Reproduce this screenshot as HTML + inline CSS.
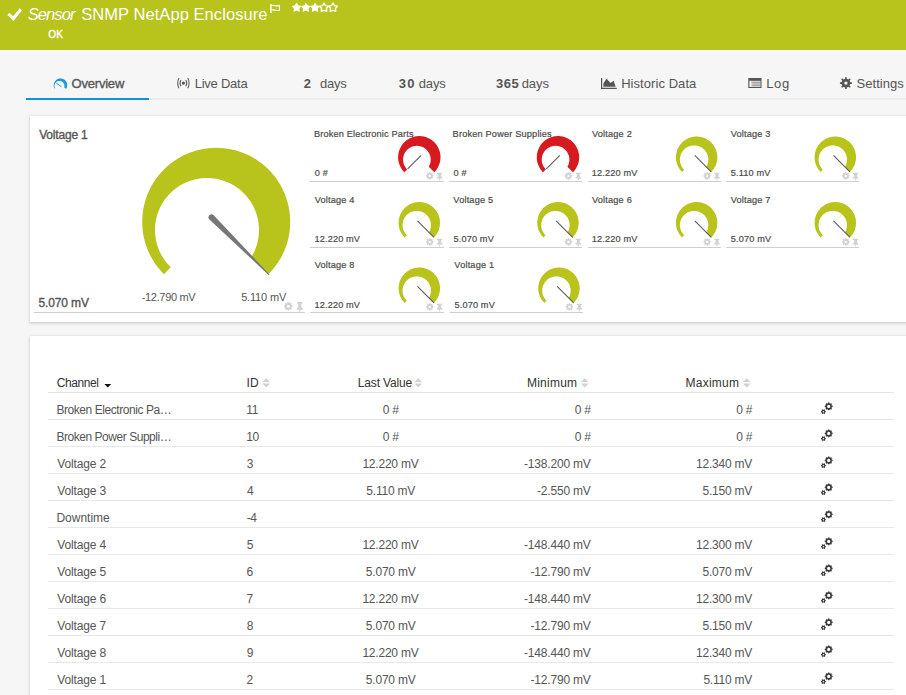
<!DOCTYPE html><html><head><meta charset="utf-8"><style>
html,body{margin:0;padding:0;width:906px;height:695px;overflow:hidden;background:#f6f6f6;font-family:"Liberation Sans",sans-serif;}
.t{position:absolute;white-space:nowrap;}
.abs{position:absolute;}
svg{position:absolute;left:0;top:0;}
</style></head><body>
<div class="abs" style="left:0;top:0;width:906px;height:50px;background:#b8c31c"></div>
<div class="t" style="left:27.64px;top:6px;font-size:16.5px;line-height:16.5px;font-weight:normal;font-style:italic;color:#fff;letter-spacing:-0.895px;">Sensor</div>
<div class="t" style="left:81.15px;top:6px;font-size:16.5px;line-height:16.5px;font-weight:normal;font-style:normal;color:#fff;letter-spacing:0.067px;">SNMP NetApp Enclosure</div>
<div class="t" style="left:48.32px;top:30px;font-size:10px;line-height:10px;font-weight:normal;font-style:normal;color:#fff;letter-spacing:0.137px;-webkit-text-stroke:0.35px #fff;">OK</div>
<div class="abs" style="left:26px;top:98px;width:880px;height:2px;background:#ebebeb"></div>
<div class="abs" style="left:26px;top:98px;width:123px;height:2px;background:#0a96d4"></div>
<div class="t" style="left:71.58px;top:77px;font-size:13px;line-height:13px;font-weight:normal;font-style:normal;color:#555;letter-spacing:-0.213px;-webkit-text-stroke:0.35px #555;">Overview</div>
<div class="t" style="left:194.74px;top:77px;font-size:13px;line-height:13px;font-weight:normal;font-style:normal;color:#555;letter-spacing:-0.245px;">Live Data</div>
<div class="t" style="left:303.75px;top:77px;font-size:13px;line-height:13px;font-weight:bold;font-style:normal;color:#555;letter-spacing:0.000px;">2</div>
<div class="t" style="left:320.06px;top:77px;font-size:13px;line-height:13px;font-weight:normal;font-style:normal;color:#555;letter-spacing:-0.216px;">days</div>
<div class="t" style="left:398.70px;top:77px;font-size:13px;line-height:13px;font-weight:bold;font-style:normal;color:#555;letter-spacing:1.374px;">30</div>
<div class="t" style="left:418.76px;top:77px;font-size:13px;line-height:13px;font-weight:normal;font-style:normal;color:#555;letter-spacing:-0.116px;">days</div>
<div class="t" style="left:495.90px;top:77px;font-size:13px;line-height:13px;font-weight:bold;font-style:normal;color:#555;letter-spacing:0.636px;">365</div>
<div class="t" style="left:521.66px;top:77px;font-size:13px;line-height:13px;font-weight:normal;font-style:normal;color:#555;letter-spacing:-0.016px;">days</div>
<div class="t" style="left:621.14px;top:77px;font-size:13px;line-height:13px;font-weight:normal;font-style:normal;color:#555;letter-spacing:0.063px;">Historic Data</div>
<div class="t" style="left:766.14px;top:77px;font-size:13px;line-height:13px;font-weight:normal;font-style:normal;color:#555;letter-spacing:0.754px;">Log</div>
<div class="t" style="left:856.61px;top:77px;font-size:13px;line-height:13px;font-weight:normal;font-style:normal;color:#555;letter-spacing:0.028px;">Settings</div>
<div class="abs" style="left:30px;top:116px;width:900px;height:206px;background:#fff;box-shadow:0 1px 3px rgba(0,0,0,0.2),0 0 2px rgba(0,0,0,0.06)"></div>
<div class="abs" style="left:30px;top:336px;width:900px;height:400px;background:#fff;box-shadow:0 1px 3px rgba(0,0,0,0.2),0 0 2px rgba(0,0,0,0.06)"></div>
<div class="abs" style="left:34px;top:312px;width:271px;height:1px;background:#cfcfcf"></div>
<div class="abs" style="left:310px;top:181px;width:134px;height:1px;background:#cfcfcf"></div>
<div class="t" style="left:313.95px;top:130px;font-size:9.2px;line-height:9.2px;font-weight:normal;font-style:normal;color:#4a4a4a;letter-spacing:0.164px;-webkit-text-stroke:0.2px #4a4a4a;">Broken Electronic Parts</div>
<div class="t" style="left:314.84px;top:169px;font-size:9.2px;line-height:9.2px;font-weight:normal;font-style:normal;color:#4a4a4a;letter-spacing:0.148px;-webkit-text-stroke:0.2px #4a4a4a;">0 #</div>
<div class="abs" style="left:449px;top:181px;width:133px;height:1px;background:#cfcfcf"></div>
<div class="t" style="left:452.62px;top:130px;font-size:9.2px;line-height:9.2px;font-weight:normal;font-style:normal;color:#4a4a4a;letter-spacing:0.180px;-webkit-text-stroke:0.2px #4a4a4a;">Broken Power Supplies</div>
<div class="t" style="left:453.51px;top:169px;font-size:9.2px;line-height:9.2px;font-weight:normal;font-style:normal;color:#4a4a4a;letter-spacing:0.148px;-webkit-text-stroke:0.2px #4a4a4a;">0 #</div>
<div class="abs" style="left:588px;top:181px;width:133px;height:1px;background:#cfcfcf"></div>
<div class="t" style="left:592.00px;top:130px;font-size:9.2px;line-height:9.2px;font-weight:normal;font-style:normal;color:#4a4a4a;letter-spacing:0.180px;-webkit-text-stroke:0.2px #4a4a4a;">Voltage 2</div>
<div class="t" style="left:591.84px;top:169px;font-size:9.2px;line-height:9.2px;font-weight:normal;font-style:normal;color:#4a4a4a;letter-spacing:0.131px;-webkit-text-stroke:0.2px #4a4a4a;">12.220 mV</div>
<div class="abs" style="left:726px;top:181px;width:133px;height:1px;background:#cfcfcf"></div>
<div class="t" style="left:730.67px;top:130px;font-size:9.2px;line-height:9.2px;font-weight:normal;font-style:normal;color:#4a4a4a;letter-spacing:0.180px;-webkit-text-stroke:0.2px #4a4a4a;">Voltage 3</div>
<div class="t" style="left:730.84px;top:169px;font-size:9.2px;line-height:9.2px;font-weight:normal;font-style:normal;color:#4a4a4a;letter-spacing:0.131px;-webkit-text-stroke:0.2px #4a4a4a;">5.110 mV</div>
<div class="abs" style="left:310px;top:247px;width:134px;height:1px;background:#cfcfcf"></div>
<div class="t" style="left:314.66px;top:196px;font-size:9.2px;line-height:9.2px;font-weight:normal;font-style:normal;color:#4a4a4a;letter-spacing:0.181px;-webkit-text-stroke:0.2px #4a4a4a;">Voltage 4</div>
<div class="t" style="left:314.50px;top:235px;font-size:9.2px;line-height:9.2px;font-weight:normal;font-style:normal;color:#4a4a4a;letter-spacing:0.131px;-webkit-text-stroke:0.2px #4a4a4a;">12.220 mV</div>
<div class="abs" style="left:449px;top:247px;width:133px;height:1px;background:#cfcfcf"></div>
<div class="t" style="left:453.33px;top:196px;font-size:9.2px;line-height:9.2px;font-weight:normal;font-style:normal;color:#4a4a4a;letter-spacing:0.180px;-webkit-text-stroke:0.2px #4a4a4a;">Voltage 5</div>
<div class="t" style="left:453.50px;top:235px;font-size:9.2px;line-height:9.2px;font-weight:normal;font-style:normal;color:#4a4a4a;letter-spacing:0.133px;-webkit-text-stroke:0.2px #4a4a4a;">5.070 mV</div>
<div class="abs" style="left:588px;top:247px;width:133px;height:1px;background:#cfcfcf"></div>
<div class="t" style="left:592.00px;top:196px;font-size:9.2px;line-height:9.2px;font-weight:normal;font-style:normal;color:#4a4a4a;letter-spacing:0.180px;-webkit-text-stroke:0.2px #4a4a4a;">Voltage 6</div>
<div class="t" style="left:591.84px;top:235px;font-size:9.2px;line-height:9.2px;font-weight:normal;font-style:normal;color:#4a4a4a;letter-spacing:0.131px;-webkit-text-stroke:0.2px #4a4a4a;">12.220 mV</div>
<div class="abs" style="left:726px;top:247px;width:133px;height:1px;background:#cfcfcf"></div>
<div class="t" style="left:730.67px;top:196px;font-size:9.2px;line-height:9.2px;font-weight:normal;font-style:normal;color:#4a4a4a;letter-spacing:0.180px;-webkit-text-stroke:0.2px #4a4a4a;">Voltage 7</div>
<div class="t" style="left:730.84px;top:235px;font-size:9.2px;line-height:9.2px;font-weight:normal;font-style:normal;color:#4a4a4a;letter-spacing:0.133px;-webkit-text-stroke:0.2px #4a4a4a;">5.070 mV</div>
<div class="abs" style="left:310px;top:312px;width:134px;height:1px;background:#cfcfcf"></div>
<div class="t" style="left:314.66px;top:261px;font-size:9.2px;line-height:9.2px;font-weight:normal;font-style:normal;color:#4a4a4a;letter-spacing:0.180px;-webkit-text-stroke:0.2px #4a4a4a;">Voltage 8</div>
<div class="t" style="left:314.50px;top:301px;font-size:9.2px;line-height:9.2px;font-weight:normal;font-style:normal;color:#4a4a4a;letter-spacing:0.131px;-webkit-text-stroke:0.2px #4a4a4a;">12.220 mV</div>
<div class="abs" style="left:450px;top:312px;width:133px;height:1px;background:#cfcfcf"></div>
<div class="t" style="left:454.33px;top:261px;font-size:9.2px;line-height:9.2px;font-weight:normal;font-style:normal;color:#4a4a4a;letter-spacing:0.180px;-webkit-text-stroke:0.2px #4a4a4a;">Voltage 1</div>
<div class="t" style="left:454.50px;top:301px;font-size:9.2px;line-height:9.2px;font-weight:normal;font-style:normal;color:#4a4a4a;letter-spacing:0.133px;-webkit-text-stroke:0.2px #4a4a4a;">5.070 mV</div>
<div class="t" style="left:39.15px;top:129px;font-size:12px;line-height:12px;font-weight:normal;font-style:normal;color:#555;letter-spacing:-0.176px;-webkit-text-stroke:0.35px #555;">Voltage 1</div>
<div class="t" style="left:38.52px;top:297px;font-size:12px;line-height:12px;font-weight:normal;font-style:normal;color:#555;letter-spacing:-0.133px;-webkit-text-stroke:0.35px #555;">5.070 mV</div>
<div class="t" style="left:141.71px;top:292px;font-size:11px;line-height:11px;font-weight:normal;font-style:normal;color:#555;letter-spacing:-0.325px;">-12.790 mV</div>
<div class="t" style="left:241.16px;top:292px;font-size:11px;line-height:11px;font-weight:normal;font-style:normal;color:#555;letter-spacing:-0.169px;">5.110 mV</div>
<div class="abs" style="left:48px;top:392px;width:846px;height:1px;background:#e4e4e4"></div>
<div class="t" style="left:56.79px;top:377px;font-size:12px;line-height:12px;font-weight:normal;font-style:normal;color:#333;letter-spacing:-0.416px;">Channel</div>
<div class="t" style="left:246.59px;top:377px;font-size:12px;line-height:12px;font-weight:normal;font-style:normal;color:#333;letter-spacing:0.000px;">ID</div>
<div class="t" style="left:357.72px;top:377px;font-size:12px;line-height:12px;font-weight:normal;font-style:normal;color:#333;letter-spacing:-0.144px;">Last Value</div>
<div class="t" style="left:526.92px;top:377px;font-size:12px;line-height:12px;font-weight:normal;font-style:normal;color:#333;letter-spacing:0.252px;">Minimum</div>
<div class="t" style="left:685.62px;top:377px;font-size:12px;line-height:12px;font-weight:normal;font-style:normal;color:#333;letter-spacing:0.229px;">Maximum</div>
<div class="abs" style="left:48px;top:419px;width:846px;height:1px;background:#e8e8e8"></div>
<div class="t" style="left:56.42px;top:404px;font-size:12px;line-height:12px;font-weight:normal;font-style:normal;color:#555;letter-spacing:-0.437px;">Broken Electronic Pa…</div>
<div class="t" style="left:246.28px;top:404px;font-size:12px;line-height:12px;font-weight:normal;font-style:normal;color:#555;letter-spacing:-0.329px;">11</div>
<div class="t" style="left:382.70px;top:404px;font-size:12px;line-height:12px;font-weight:normal;font-style:normal;color:#555;letter-spacing:-0.242px;">0 #</div>
<div class="t" style="left:574.63px;top:404px;font-size:12px;line-height:12px;font-weight:normal;font-style:normal;color:#555;letter-spacing:-0.226px;">0 #</div>
<div class="t" style="left:736.16px;top:404px;font-size:12px;line-height:12px;font-weight:normal;font-style:normal;color:#555;letter-spacing:-0.242px;">0 #</div>
<div class="abs" style="left:48px;top:446px;width:846px;height:1px;background:#e8e8e8"></div>
<div class="t" style="left:56.42px;top:431px;font-size:12px;line-height:12px;font-weight:normal;font-style:normal;color:#555;letter-spacing:-0.460px;">Broken Power Suppli…</div>
<div class="t" style="left:246.28px;top:431px;font-size:12px;line-height:12px;font-weight:normal;font-style:normal;color:#555;letter-spacing:-0.359px;">10</div>
<div class="t" style="left:382.70px;top:431px;font-size:12px;line-height:12px;font-weight:normal;font-style:normal;color:#555;letter-spacing:-0.242px;">0 #</div>
<div class="t" style="left:574.63px;top:431px;font-size:12px;line-height:12px;font-weight:normal;font-style:normal;color:#555;letter-spacing:-0.226px;">0 #</div>
<div class="t" style="left:736.16px;top:431px;font-size:12px;line-height:12px;font-weight:normal;font-style:normal;color:#555;letter-spacing:-0.242px;">0 #</div>
<div class="abs" style="left:48px;top:473px;width:846px;height:1px;background:#e8e8e8"></div>
<div class="t" style="left:57.35px;top:458px;font-size:12px;line-height:12px;font-weight:normal;font-style:normal;color:#555;letter-spacing:-0.154px;">Voltage 2</div>
<div class="t" style="left:246.74px;top:458px;font-size:12px;line-height:12px;font-weight:normal;font-style:normal;color:#555;letter-spacing:0.000px;">3</div>
<div class="t" style="left:362.41px;top:458px;font-size:12px;line-height:12px;font-weight:normal;font-style:normal;color:#555;letter-spacing:-0.214px;">12.220 mV</div>
<div class="t" style="left:524.05px;top:458px;font-size:12px;line-height:12px;font-weight:normal;font-style:normal;color:#555;letter-spacing:-0.191px;">-138.200 mV</div>
<div class="t" style="left:696.03px;top:458px;font-size:12px;line-height:12px;font-weight:normal;font-style:normal;color:#555;letter-spacing:-0.214px;">12.340 mV</div>
<div class="abs" style="left:48px;top:500px;width:846px;height:1px;background:#e8e8e8"></div>
<div class="t" style="left:57.35px;top:485px;font-size:12px;line-height:12px;font-weight:normal;font-style:normal;color:#555;letter-spacing:-0.155px;">Voltage 3</div>
<div class="t" style="left:246.92px;top:485px;font-size:12px;line-height:12px;font-weight:normal;font-style:normal;color:#555;letter-spacing:0.000px;">4</div>
<div class="t" style="left:366.30px;top:485px;font-size:12px;line-height:12px;font-weight:normal;font-style:normal;color:#555;letter-spacing:-0.214px;">5.110 mV</div>
<div class="t" style="left:537.03px;top:485px;font-size:12px;line-height:12px;font-weight:normal;font-style:normal;color:#555;letter-spacing:-0.192px;">-2.550 mV</div>
<div class="t" style="left:702.52px;top:485px;font-size:12px;line-height:12px;font-weight:normal;font-style:normal;color:#555;letter-spacing:-0.218px;">5.150 mV</div>
<div class="abs" style="left:48px;top:527px;width:846px;height:1px;background:#e8e8e8"></div>
<div class="t" style="left:56.42px;top:512px;font-size:12px;line-height:12px;font-weight:normal;font-style:normal;color:#555;letter-spacing:0.000px;">Downtime</div>
<div class="t" style="left:246.67px;top:512px;font-size:12px;line-height:12px;font-weight:normal;font-style:normal;color:#555;letter-spacing:-0.294px;">-4</div>
<div class="abs" style="left:48px;top:554px;width:846px;height:1px;background:#e8e8e8"></div>
<div class="t" style="left:57.35px;top:539px;font-size:12px;line-height:12px;font-weight:normal;font-style:normal;color:#555;letter-spacing:-0.155px;">Voltage 4</div>
<div class="t" style="left:246.72px;top:539px;font-size:12px;line-height:12px;font-weight:normal;font-style:normal;color:#555;letter-spacing:0.000px;">5</div>
<div class="t" style="left:362.41px;top:539px;font-size:12px;line-height:12px;font-weight:normal;font-style:normal;color:#555;letter-spacing:-0.214px;">12.220 mV</div>
<div class="t" style="left:524.05px;top:539px;font-size:12px;line-height:12px;font-weight:normal;font-style:normal;color:#555;letter-spacing:-0.191px;">-148.440 mV</div>
<div class="t" style="left:696.03px;top:539px;font-size:12px;line-height:12px;font-weight:normal;font-style:normal;color:#555;letter-spacing:-0.214px;">12.300 mV</div>
<div class="abs" style="left:48px;top:581px;width:846px;height:1px;background:#e8e8e8"></div>
<div class="t" style="left:57.35px;top:566px;font-size:12px;line-height:12px;font-weight:normal;font-style:normal;color:#555;letter-spacing:-0.155px;">Voltage 5</div>
<div class="t" style="left:246.59px;top:566px;font-size:12px;line-height:12px;font-weight:normal;font-style:normal;color:#555;letter-spacing:0.000px;">6</div>
<div class="t" style="left:365.87px;top:566px;font-size:12px;line-height:12px;font-weight:normal;font-style:normal;color:#555;letter-spacing:-0.218px;">5.070 mV</div>
<div class="t" style="left:530.54px;top:566px;font-size:12px;line-height:12px;font-weight:normal;font-style:normal;color:#555;letter-spacing:-0.191px;">-12.790 mV</div>
<div class="t" style="left:702.52px;top:566px;font-size:12px;line-height:12px;font-weight:normal;font-style:normal;color:#555;letter-spacing:-0.218px;">5.070 mV</div>
<div class="abs" style="left:48px;top:608px;width:846px;height:1px;background:#e8e8e8"></div>
<div class="t" style="left:57.35px;top:593px;font-size:12px;line-height:12px;font-weight:normal;font-style:normal;color:#555;letter-spacing:-0.155px;">Voltage 6</div>
<div class="t" style="left:246.58px;top:593px;font-size:12px;line-height:12px;font-weight:normal;font-style:normal;color:#555;letter-spacing:0.000px;">7</div>
<div class="t" style="left:362.41px;top:593px;font-size:12px;line-height:12px;font-weight:normal;font-style:normal;color:#555;letter-spacing:-0.214px;">12.220 mV</div>
<div class="t" style="left:524.05px;top:593px;font-size:12px;line-height:12px;font-weight:normal;font-style:normal;color:#555;letter-spacing:-0.191px;">-148.440 mV</div>
<div class="t" style="left:696.03px;top:593px;font-size:12px;line-height:12px;font-weight:normal;font-style:normal;color:#555;letter-spacing:-0.214px;">12.300 mV</div>
<div class="abs" style="left:48px;top:635px;width:846px;height:1px;background:#e8e8e8"></div>
<div class="t" style="left:57.35px;top:620px;font-size:12px;line-height:12px;font-weight:normal;font-style:normal;color:#555;letter-spacing:-0.154px;">Voltage 7</div>
<div class="t" style="left:246.68px;top:620px;font-size:12px;line-height:12px;font-weight:normal;font-style:normal;color:#555;letter-spacing:0.000px;">8</div>
<div class="t" style="left:365.87px;top:620px;font-size:12px;line-height:12px;font-weight:normal;font-style:normal;color:#555;letter-spacing:-0.218px;">5.070 mV</div>
<div class="t" style="left:530.54px;top:620px;font-size:12px;line-height:12px;font-weight:normal;font-style:normal;color:#555;letter-spacing:-0.191px;">-12.790 mV</div>
<div class="t" style="left:702.52px;top:620px;font-size:12px;line-height:12px;font-weight:normal;font-style:normal;color:#555;letter-spacing:-0.218px;">5.150 mV</div>
<div class="abs" style="left:48px;top:662px;width:846px;height:1px;background:#e8e8e8"></div>
<div class="t" style="left:57.35px;top:647px;font-size:12px;line-height:12px;font-weight:normal;font-style:normal;color:#555;letter-spacing:-0.155px;">Voltage 8</div>
<div class="t" style="left:246.64px;top:647px;font-size:12px;line-height:12px;font-weight:normal;font-style:normal;color:#555;letter-spacing:0.000px;">9</div>
<div class="t" style="left:362.41px;top:647px;font-size:12px;line-height:12px;font-weight:normal;font-style:normal;color:#555;letter-spacing:-0.214px;">12.220 mV</div>
<div class="t" style="left:524.05px;top:647px;font-size:12px;line-height:12px;font-weight:normal;font-style:normal;color:#555;letter-spacing:-0.191px;">-148.440 mV</div>
<div class="t" style="left:696.03px;top:647px;font-size:12px;line-height:12px;font-weight:normal;font-style:normal;color:#555;letter-spacing:-0.214px;">12.340 mV</div>
<div class="abs" style="left:48px;top:689px;width:846px;height:1px;background:#e8e8e8"></div>
<div class="t" style="left:57.35px;top:674px;font-size:12px;line-height:12px;font-weight:normal;font-style:normal;color:#555;letter-spacing:-0.154px;">Voltage 1</div>
<div class="t" style="left:246.60px;top:674px;font-size:12px;line-height:12px;font-weight:normal;font-style:normal;color:#555;letter-spacing:0.000px;">2</div>
<div class="t" style="left:365.87px;top:674px;font-size:12px;line-height:12px;font-weight:normal;font-style:normal;color:#555;letter-spacing:-0.218px;">5.070 mV</div>
<div class="t" style="left:530.54px;top:674px;font-size:12px;line-height:12px;font-weight:normal;font-style:normal;color:#555;letter-spacing:-0.191px;">-12.790 mV</div>
<div class="t" style="left:703.38px;top:674px;font-size:12px;line-height:12px;font-weight:normal;font-style:normal;color:#555;letter-spacing:-0.214px;">5.110 mV</div>
<svg width="906" height="695" style="z-index:3"><path d="M163.87,274.13 L161.21,271.32 L158.69,268.37 L156.33,265.30 L154.14,262.10 L152.11,258.80 L150.27,255.40 L148.60,251.90 L147.12,248.32 L145.82,244.67 L144.72,240.95 L143.82,237.19 L143.11,233.38 L142.61,229.54 L142.30,225.67 L142.20,221.80 L142.30,217.93 L142.61,214.06 L143.11,210.22 L143.82,206.41 L144.72,202.65 L145.82,198.93 L147.12,195.28 L148.60,191.70 L150.27,188.20 L152.11,184.80 L154.14,181.50 L156.33,178.30 L158.69,175.23 L161.21,172.28 L163.87,169.47 L166.68,166.81 L169.63,164.29 L172.70,161.93 L175.90,159.74 L179.20,157.71 L182.60,155.87 L186.10,154.20 L189.68,152.72 L193.33,151.42 L197.05,150.32 L200.81,149.42 L204.62,148.71 L208.46,148.21 L212.33,147.90 L216.20,147.80 L220.07,147.90 L223.94,148.21 L227.78,148.71 L231.59,149.42 L235.35,150.32 L239.07,151.42 L242.72,152.72 L246.30,154.20 L249.80,155.87 L253.20,157.71 L256.50,159.74 L259.70,161.93 L262.77,164.29 L265.72,166.81 L268.53,169.47 L271.19,172.28 L273.71,175.23 L276.07,178.30 L278.26,181.50 L280.29,184.80 L282.13,188.20 L283.80,191.70 L285.28,195.28 L286.58,198.93 L287.68,202.65 L288.58,206.41 L289.29,210.22 L289.79,214.06 L290.10,217.93 L290.20,221.80 L290.10,225.67 L289.79,229.54 L289.29,233.38 L288.58,237.19 L287.68,240.95 L286.58,244.67 L285.28,248.32 L283.80,251.90 L282.13,255.40 L280.29,258.80 L278.26,262.10 L276.07,265.30 L273.71,268.37 L271.19,271.32 L268.53,274.13 L251.43,257.03 L252.75,254.71 L253.94,252.37 L255.00,249.99 L255.93,247.60 L256.73,245.20 L257.40,242.79 L257.95,240.39 L258.38,237.99 L258.70,235.61 L258.90,233.24 L258.99,230.90 L258.98,228.58 L258.87,226.28 L258.66,224.03 L258.35,221.80 L257.95,219.61 L257.47,217.46 L256.89,215.35 L256.24,213.29 L255.51,211.27 L254.70,209.29 L253.81,207.36 L252.86,205.48 L251.83,203.65 L250.73,201.86 L249.57,200.13 L248.34,198.45 L247.04,196.82 L245.69,195.25 L244.27,193.73 L242.79,192.27 L241.25,190.87 L239.65,189.53 L237.99,188.24 L236.28,187.03 L234.51,185.87 L232.68,184.78 L230.80,183.77 L228.87,182.82 L226.88,181.95 L224.84,181.16 L222.75,180.44 L220.61,179.81 L218.43,179.27 L216.20,178.82 L213.93,178.46 L211.62,178.21 L209.27,178.05 L206.89,178.00 L204.48,178.06 L202.05,178.24 L199.59,178.53 L197.12,178.95 L194.64,179.49 L192.16,180.16 L189.68,180.97 L187.22,181.91 L184.77,182.99 L182.35,184.21 L179.97,185.57 L177.64,187.08 L175.36,188.73 L173.15,190.52 L171.02,192.46 L168.97,194.53 L167.02,196.74 L165.19,199.09 L163.47,201.56 L161.88,204.15 L160.43,206.86 L159.14,209.67 L158.00,212.58 L157.04,215.58 L156.25,218.66 L155.65,221.80 L155.24,224.99 L155.03,228.23 L155.02,231.49 L155.22,234.76 L155.62,238.03 L156.24,241.28 L157.06,244.50 L158.09,247.67 L159.33,250.78 L160.77,253.80 L162.40,256.74 L164.22,259.56 L166.22,262.27 L168.40,264.84 L170.73,267.27 Z" fill="#b8c31c"/><path d="M209.48,219.53 L268.85,275.15 L269.55,274.45 L213.72,215.27 A3.0,3.0 0 0 0 209.48,219.53 Z" fill="#777"/><path d="M291.55,305.30 L292.51,305.45 L292.51,307.15 L291.55,307.30 L291.48,307.50 L291.40,307.70 L291.31,307.89 L291.88,308.68 L290.68,309.88 L289.89,309.31 L289.70,309.40 L289.50,309.48 L289.30,309.55 L289.15,310.51 L287.45,310.51 L287.30,309.55 L287.10,309.48 L286.90,309.40 L286.71,309.31 L285.92,309.88 L284.72,308.68 L285.29,307.89 L285.20,307.70 L285.12,307.50 L285.05,307.30 L284.09,307.15 L284.09,305.45 L285.05,305.30 L285.12,305.10 L285.20,304.90 L285.29,304.71 L284.72,303.92 L285.92,302.72 L286.71,303.29 L286.90,303.20 L287.10,303.12 L287.30,303.05 L287.45,302.09 L289.15,302.09 L289.30,303.05 L289.50,303.12 L289.70,303.20 L289.89,303.29 L290.68,302.72 L291.88,303.92 L291.31,304.71 L291.40,304.90 L291.48,305.10 Z" fill="#d2d2d2"/><circle cx="288.30" cy="306.30" r="1.4" fill="#fff"/><path transform="translate(296.60,302.10) scale(1.03,1.3)" d="M0.3,0 h5.3 v1.3 h-1 v2.4 l1.4,1 v1.1 h-2.4 v1.9 h-1 v-1.9 h-2.4 v-1.1 l1.4,-1 v-2.4 h-1 z" fill="#d2d2d2"/><path d="M404.31,172.24 L403.55,171.44 L402.82,170.59 L402.15,169.71 L401.52,168.80 L400.94,167.85 L400.41,166.87 L399.93,165.87 L399.51,164.85 L399.14,163.80 L398.82,162.74 L398.56,161.66 L398.36,160.57 L398.22,159.47 L398.13,158.36 L398.10,157.25 L398.13,156.14 L398.22,155.03 L398.36,153.93 L398.56,152.84 L398.82,151.76 L399.14,150.70 L399.51,149.65 L399.93,148.63 L400.41,147.63 L400.94,146.65 L401.52,145.70 L402.15,144.79 L402.82,143.91 L403.55,143.06 L404.31,142.26 L405.11,141.50 L405.96,140.77 L406.84,140.10 L407.75,139.47 L408.70,138.89 L409.68,138.36 L410.68,137.88 L411.70,137.46 L412.75,137.09 L413.81,136.77 L414.89,136.51 L415.98,136.31 L417.08,136.17 L418.19,136.08 L419.30,136.05 L420.41,136.08 L421.52,136.17 L422.62,136.31 L423.71,136.51 L424.79,136.77 L425.85,137.09 L426.90,137.46 L427.92,137.88 L428.92,138.36 L429.90,138.89 L430.85,139.47 L431.76,140.10 L432.64,140.77 L433.49,141.50 L434.29,142.26 L435.05,143.06 L435.78,143.91 L436.45,144.79 L437.08,145.70 L437.66,146.65 L438.19,147.63 L438.67,148.63 L439.09,149.65 L439.46,150.70 L439.78,151.76 L440.04,152.84 L440.24,153.93 L440.38,155.03 L440.47,156.14 L440.50,157.25 L440.47,158.36 L440.38,159.47 L440.24,160.57 L440.04,161.66 L439.78,162.74 L439.46,163.80 L439.09,164.85 L438.67,165.87 L438.19,166.87 L437.66,167.85 L437.08,168.80 L436.45,169.71 L435.78,170.59 L435.05,171.44 L434.29,172.24 L428.76,166.71 L429.11,166.08 L429.42,165.45 L429.70,164.81 L429.94,164.16 L430.15,163.51 L430.32,162.87 L430.46,162.22 L430.57,161.57 L430.64,160.93 L430.68,160.30 L430.70,159.67 L430.69,159.05 L430.65,158.44 L430.58,157.84 L430.49,157.25 L430.37,156.67 L430.24,156.10 L430.07,155.54 L429.89,155.00 L429.69,154.47 L429.47,153.95 L429.22,153.44 L428.96,152.95 L428.68,152.47 L428.39,152.00 L428.07,151.55 L427.74,151.12 L427.40,150.69 L427.04,150.28 L426.66,149.89 L426.27,149.51 L425.86,149.15 L425.43,148.81 L425.00,148.48 L424.55,148.16 L424.08,147.87 L423.60,147.59 L423.11,147.33 L422.60,147.08 L422.08,146.86 L421.55,146.66 L421.01,146.48 L420.45,146.31 L419.88,146.18 L419.30,146.06 L418.71,145.97 L418.11,145.90 L417.50,145.86 L416.88,145.85 L416.25,145.87 L415.62,145.91 L414.98,145.98 L414.33,146.09 L413.68,146.23 L413.04,146.40 L412.39,146.61 L411.74,146.85 L411.10,147.13 L410.47,147.44 L409.84,147.79 L409.23,148.18 L408.63,148.61 L408.04,149.07 L407.47,149.57 L406.93,150.11 L406.41,150.68 L405.92,151.29 L405.46,151.94 L405.03,152.61 L404.64,153.32 L404.28,154.06 L403.97,154.82 L403.70,155.61 L403.48,156.42 L403.31,157.25 L403.19,158.09 L403.12,158.95 L403.10,159.82 L403.14,160.69 L403.23,161.56 L403.38,162.42 L403.59,163.28 L403.85,164.13 L404.16,164.96 L404.53,165.78 L404.96,166.56 L405.43,167.33 L405.96,168.06 L406.53,168.75 L407.14,169.41 Z" fill="#d71920"/><line x1="421.14" y1="155.41" x2="407.63" y2="168.92" stroke="#5a5a5a" stroke-width="1.05"/><path d="M432.59,175.10 L433.55,175.26 L433.55,176.54 L432.59,176.70 L432.52,176.91 L432.44,177.11 L432.34,177.30 L432.90,178.09 L431.99,179.00 L431.20,178.44 L431.01,178.54 L430.81,178.62 L430.60,178.69 L430.44,179.65 L429.16,179.65 L429.00,178.69 L428.79,178.62 L428.59,178.54 L428.40,178.44 L427.61,179.00 L426.70,178.09 L427.26,177.30 L427.16,177.11 L427.08,176.91 L427.01,176.70 L426.05,176.54 L426.05,175.26 L427.01,175.10 L427.08,174.89 L427.16,174.69 L427.26,174.50 L426.70,173.71 L427.61,172.80 L428.40,173.36 L428.59,173.26 L428.79,173.18 L429.00,173.11 L429.16,172.15 L430.44,172.15 L430.60,173.11 L430.81,173.18 L431.01,173.26 L431.20,173.36 L431.99,172.80 L432.90,173.71 L432.34,174.50 L432.44,174.69 L432.52,174.89 Z" fill="#d2d2d2"/><circle cx="429.80" cy="175.90" r="1.2" fill="#fff"/><path transform="translate(436.50,172.80) scale(1.0)" d="M0.3,0 h5.3 v1.3 h-1 v2.4 l1.4,1 v1.1 h-2.4 v1.9 h-1 v-1.9 h-2.4 v-1.1 l1.4,-1 v-2.4 h-1 z" fill="#d2d2d2"/><path d="M542.98,172.24 L542.22,171.44 L541.49,170.59 L540.82,169.71 L540.19,168.80 L539.61,167.85 L539.08,166.87 L538.60,165.87 L538.18,164.85 L537.81,163.80 L537.49,162.74 L537.23,161.66 L537.03,160.57 L536.89,159.47 L536.80,158.36 L536.77,157.25 L536.80,156.14 L536.89,155.03 L537.03,153.93 L537.23,152.84 L537.49,151.76 L537.81,150.70 L538.18,149.65 L538.60,148.63 L539.08,147.63 L539.61,146.65 L540.19,145.70 L540.82,144.79 L541.49,143.91 L542.22,143.06 L542.98,142.26 L543.78,141.50 L544.63,140.77 L545.51,140.10 L546.42,139.47 L547.37,138.89 L548.35,138.36 L549.35,137.88 L550.37,137.46 L551.42,137.09 L552.48,136.77 L553.56,136.51 L554.65,136.31 L555.75,136.17 L556.86,136.08 L557.97,136.05 L559.08,136.08 L560.19,136.17 L561.29,136.31 L562.38,136.51 L563.46,136.77 L564.52,137.09 L565.57,137.46 L566.59,137.88 L567.59,138.36 L568.57,138.89 L569.52,139.47 L570.43,140.10 L571.31,140.77 L572.16,141.50 L572.96,142.26 L573.72,143.06 L574.45,143.91 L575.12,144.79 L575.75,145.70 L576.33,146.65 L576.86,147.63 L577.34,148.63 L577.76,149.65 L578.13,150.70 L578.45,151.76 L578.71,152.84 L578.91,153.93 L579.05,155.03 L579.14,156.14 L579.17,157.25 L579.14,158.36 L579.05,159.47 L578.91,160.57 L578.71,161.66 L578.45,162.74 L578.13,163.80 L577.76,164.85 L577.34,165.87 L576.86,166.87 L576.33,167.85 L575.75,168.80 L575.12,169.71 L574.45,170.59 L573.72,171.44 L572.96,172.24 L567.43,166.71 L567.78,166.08 L568.09,165.45 L568.37,164.81 L568.61,164.16 L568.82,163.51 L568.99,162.87 L569.13,162.22 L569.24,161.57 L569.31,160.93 L569.35,160.30 L569.37,159.67 L569.36,159.05 L569.32,158.44 L569.25,157.84 L569.16,157.25 L569.04,156.67 L568.91,156.10 L568.74,155.54 L568.56,155.00 L568.36,154.47 L568.14,153.95 L567.89,153.44 L567.63,152.95 L567.35,152.47 L567.06,152.00 L566.74,151.55 L566.41,151.12 L566.07,150.69 L565.71,150.28 L565.33,149.89 L564.94,149.51 L564.53,149.15 L564.10,148.81 L563.67,148.48 L563.22,148.16 L562.75,147.87 L562.27,147.59 L561.78,147.33 L561.27,147.08 L560.75,146.86 L560.22,146.66 L559.68,146.48 L559.12,146.31 L558.55,146.18 L557.97,146.06 L557.38,145.97 L556.78,145.90 L556.17,145.86 L555.55,145.85 L554.92,145.87 L554.29,145.91 L553.65,145.98 L553.00,146.09 L552.35,146.23 L551.71,146.40 L551.06,146.61 L550.41,146.85 L549.77,147.13 L549.14,147.44 L548.51,147.79 L547.90,148.18 L547.30,148.61 L546.71,149.07 L546.14,149.57 L545.60,150.11 L545.08,150.68 L544.59,151.29 L544.13,151.94 L543.70,152.61 L543.31,153.32 L542.95,154.06 L542.64,154.82 L542.37,155.61 L542.15,156.42 L541.98,157.25 L541.86,158.09 L541.79,158.95 L541.77,159.82 L541.81,160.69 L541.90,161.56 L542.05,162.42 L542.26,163.28 L542.52,164.13 L542.83,164.96 L543.20,165.78 L543.63,166.56 L544.10,167.33 L544.63,168.06 L545.20,168.75 L545.81,169.41 Z" fill="#d71920"/><line x1="559.81" y1="155.41" x2="546.30" y2="168.92" stroke="#5a5a5a" stroke-width="1.05"/><path d="M571.26,175.10 L572.22,175.26 L572.22,176.54 L571.26,176.70 L571.19,176.91 L571.11,177.11 L571.01,177.30 L571.57,178.09 L570.66,179.00 L569.87,178.44 L569.68,178.54 L569.48,178.62 L569.27,178.69 L569.11,179.65 L567.83,179.65 L567.67,178.69 L567.46,178.62 L567.26,178.54 L567.07,178.44 L566.28,179.00 L565.37,178.09 L565.93,177.30 L565.83,177.11 L565.75,176.91 L565.68,176.70 L564.72,176.54 L564.72,175.26 L565.68,175.10 L565.75,174.89 L565.83,174.69 L565.93,174.50 L565.37,173.71 L566.28,172.80 L567.07,173.36 L567.26,173.26 L567.46,173.18 L567.67,173.11 L567.83,172.15 L569.11,172.15 L569.27,173.11 L569.48,173.18 L569.68,173.26 L569.87,173.36 L570.66,172.80 L571.57,173.71 L571.01,174.50 L571.11,174.69 L571.19,174.89 Z" fill="#d2d2d2"/><circle cx="568.47" cy="175.90" r="1.2" fill="#fff"/><path transform="translate(575.17,172.80) scale(1.0)" d="M0.3,0 h5.3 v1.3 h-1 v2.4 l1.4,1 v1.1 h-2.4 v1.9 h-1 v-1.9 h-2.4 v-1.1 l1.4,-1 v-2.4 h-1 z" fill="#d2d2d2"/><path d="M682.00,171.89 L681.26,171.10 L680.55,170.28 L679.89,169.42 L679.28,168.52 L678.71,167.60 L678.20,166.65 L677.73,165.67 L677.31,164.67 L676.95,163.65 L676.65,162.61 L676.39,161.55 L676.19,160.49 L676.05,159.41 L675.97,158.33 L675.94,157.25 L675.97,156.17 L676.05,155.09 L676.19,154.01 L676.39,152.95 L676.65,151.89 L676.95,150.85 L677.31,149.83 L677.73,148.83 L678.20,147.85 L678.71,146.90 L679.28,145.98 L679.89,145.08 L680.55,144.22 L681.26,143.40 L682.00,142.61 L682.79,141.87 L683.61,141.16 L684.47,140.50 L685.37,139.89 L686.29,139.32 L687.24,138.81 L688.22,138.34 L689.22,137.92 L690.24,137.56 L691.28,137.26 L692.34,137.00 L693.40,136.80 L694.48,136.66 L695.56,136.58 L696.64,136.55 L697.72,136.58 L698.80,136.66 L699.88,136.80 L700.94,137.00 L702.00,137.26 L703.04,137.56 L704.06,137.92 L705.06,138.34 L706.04,138.81 L706.99,139.32 L707.91,139.89 L708.81,140.50 L709.67,141.16 L710.49,141.87 L711.28,142.61 L712.02,143.40 L712.73,144.22 L713.39,145.08 L714.00,145.98 L714.57,146.90 L715.08,147.85 L715.55,148.83 L715.97,149.83 L716.33,150.85 L716.63,151.89 L716.89,152.95 L717.09,154.01 L717.23,155.09 L717.31,156.17 L717.34,157.25 L717.31,158.33 L717.23,159.41 L717.09,160.49 L716.89,161.55 L716.63,162.61 L716.33,163.65 L715.97,164.67 L715.55,165.67 L715.08,166.65 L714.57,167.60 L714.00,168.52 L713.39,169.42 L712.73,170.28 L712.02,171.10 L711.28,171.89 L706.28,166.89 L706.64,166.25 L706.96,165.61 L707.24,164.95 L707.49,164.30 L707.70,163.64 L707.88,162.98 L708.03,162.32 L708.14,161.66 L708.22,161.01 L708.27,160.37 L708.29,159.73 L708.28,159.09 L708.24,158.47 L708.18,157.85 L708.09,157.25 L707.98,156.66 L707.84,156.07 L707.69,155.50 L707.50,154.94 L707.30,154.39 L707.08,153.86 L706.83,153.34 L706.57,152.83 L706.29,152.33 L705.99,151.85 L705.67,151.38 L705.34,150.93 L704.98,150.49 L704.62,150.07 L704.23,149.66 L703.83,149.27 L703.41,148.89 L702.98,148.53 L702.53,148.18 L702.07,147.85 L701.59,147.54 L701.09,147.25 L700.59,146.97 L700.06,146.72 L699.53,146.48 L698.97,146.27 L698.41,146.07 L697.83,145.90 L697.24,145.75 L696.64,145.63 L696.03,145.53 L695.40,145.46 L694.77,145.42 L694.12,145.40 L693.47,145.41 L692.81,145.46 L692.14,145.53 L691.47,145.64 L690.80,145.79 L690.12,145.96 L689.45,146.18 L688.78,146.43 L688.11,146.72 L687.45,147.05 L686.80,147.41 L686.16,147.82 L685.54,148.26 L684.93,148.75 L684.35,149.27 L683.79,149.83 L683.25,150.43 L682.74,151.06 L682.27,151.73 L681.83,152.44 L681.43,153.17 L681.07,153.94 L680.75,154.73 L680.48,155.55 L680.26,156.39 L680.09,157.25 L679.97,158.12 L679.90,159.01 L679.89,159.90 L679.94,160.80 L680.05,161.70 L680.21,162.59 L680.43,163.47 L680.71,164.34 L681.04,165.20 L681.43,166.03 L681.87,166.84 L682.37,167.62 L682.92,168.36 L683.51,169.07 L684.15,169.74 Z" fill="#b8c31c"/><line x1="694.80" y1="155.41" x2="711.28" y2="171.89" stroke="#5a5a5a" stroke-width="1.05"/><path d="M709.93,175.10 L710.89,175.26 L710.89,176.54 L709.93,176.70 L709.86,176.91 L709.78,177.11 L709.68,177.30 L710.24,178.09 L709.33,179.00 L708.54,178.44 L708.35,178.54 L708.15,178.62 L707.94,178.69 L707.78,179.65 L706.50,179.65 L706.34,178.69 L706.13,178.62 L705.93,178.54 L705.74,178.44 L704.95,179.00 L704.04,178.09 L704.60,177.30 L704.50,177.11 L704.42,176.91 L704.35,176.70 L703.39,176.54 L703.39,175.26 L704.35,175.10 L704.42,174.89 L704.50,174.69 L704.60,174.50 L704.04,173.71 L704.95,172.80 L705.74,173.36 L705.93,173.26 L706.13,173.18 L706.34,173.11 L706.50,172.15 L707.78,172.15 L707.94,173.11 L708.15,173.18 L708.35,173.26 L708.54,173.36 L709.33,172.80 L710.24,173.71 L709.68,174.50 L709.78,174.69 L709.86,174.89 Z" fill="#d2d2d2"/><circle cx="707.14" cy="175.90" r="1.2" fill="#fff"/><path transform="translate(713.84,172.80) scale(1.0)" d="M0.3,0 h5.3 v1.3 h-1 v2.4 l1.4,1 v1.1 h-2.4 v1.9 h-1 v-1.9 h-2.4 v-1.1 l1.4,-1 v-2.4 h-1 z" fill="#d2d2d2"/><path d="M820.67,171.89 L819.93,171.10 L819.22,170.28 L818.56,169.42 L817.95,168.52 L817.38,167.60 L816.87,166.65 L816.40,165.67 L815.98,164.67 L815.62,163.65 L815.32,162.61 L815.06,161.55 L814.86,160.49 L814.72,159.41 L814.64,158.33 L814.61,157.25 L814.64,156.17 L814.72,155.09 L814.86,154.01 L815.06,152.95 L815.32,151.89 L815.62,150.85 L815.98,149.83 L816.40,148.83 L816.87,147.85 L817.38,146.90 L817.95,145.98 L818.56,145.08 L819.22,144.22 L819.93,143.40 L820.67,142.61 L821.46,141.87 L822.28,141.16 L823.14,140.50 L824.04,139.89 L824.96,139.32 L825.91,138.81 L826.89,138.34 L827.89,137.92 L828.91,137.56 L829.95,137.26 L831.01,137.00 L832.07,136.80 L833.15,136.66 L834.23,136.58 L835.31,136.55 L836.39,136.58 L837.47,136.66 L838.55,136.80 L839.61,137.00 L840.67,137.26 L841.71,137.56 L842.73,137.92 L843.73,138.34 L844.71,138.81 L845.66,139.32 L846.58,139.89 L847.48,140.50 L848.34,141.16 L849.16,141.87 L849.95,142.61 L850.69,143.40 L851.40,144.22 L852.06,145.08 L852.67,145.98 L853.24,146.90 L853.75,147.85 L854.22,148.83 L854.64,149.83 L855.00,150.85 L855.30,151.89 L855.56,152.95 L855.76,154.01 L855.90,155.09 L855.98,156.17 L856.01,157.25 L855.98,158.33 L855.90,159.41 L855.76,160.49 L855.56,161.55 L855.30,162.61 L855.00,163.65 L854.64,164.67 L854.22,165.67 L853.75,166.65 L853.24,167.60 L852.67,168.52 L852.06,169.42 L851.40,170.28 L850.69,171.10 L849.95,171.89 L844.95,166.89 L845.31,166.25 L845.63,165.61 L845.91,164.95 L846.16,164.30 L846.37,163.64 L846.55,162.98 L846.70,162.32 L846.81,161.66 L846.89,161.01 L846.94,160.37 L846.96,159.73 L846.95,159.09 L846.91,158.47 L846.85,157.85 L846.76,157.25 L846.65,156.66 L846.51,156.07 L846.36,155.50 L846.17,154.94 L845.97,154.39 L845.75,153.86 L845.50,153.34 L845.24,152.83 L844.96,152.33 L844.66,151.85 L844.34,151.38 L844.01,150.93 L843.65,150.49 L843.29,150.07 L842.90,149.66 L842.50,149.27 L842.08,148.89 L841.65,148.53 L841.20,148.18 L840.74,147.85 L840.26,147.54 L839.76,147.25 L839.26,146.97 L838.73,146.72 L838.20,146.48 L837.64,146.27 L837.08,146.07 L836.50,145.90 L835.91,145.75 L835.31,145.63 L834.70,145.53 L834.07,145.46 L833.44,145.42 L832.79,145.40 L832.14,145.41 L831.48,145.46 L830.81,145.53 L830.14,145.64 L829.47,145.79 L828.79,145.96 L828.12,146.18 L827.45,146.43 L826.78,146.72 L826.12,147.05 L825.47,147.41 L824.83,147.82 L824.21,148.26 L823.60,148.75 L823.02,149.27 L822.46,149.83 L821.92,150.43 L821.41,151.06 L820.94,151.73 L820.50,152.44 L820.10,153.17 L819.74,153.94 L819.42,154.73 L819.15,155.55 L818.93,156.39 L818.76,157.25 L818.64,158.12 L818.57,159.01 L818.56,159.90 L818.61,160.80 L818.72,161.70 L818.88,162.59 L819.10,163.47 L819.38,164.34 L819.71,165.20 L820.10,166.03 L820.54,166.84 L821.04,167.62 L821.59,168.36 L822.18,169.07 L822.82,169.74 Z" fill="#b8c31c"/><line x1="833.47" y1="155.41" x2="849.95" y2="171.89" stroke="#5a5a5a" stroke-width="1.05"/><path d="M848.60,175.10 L849.56,175.26 L849.56,176.54 L848.60,176.70 L848.53,176.91 L848.45,177.11 L848.35,177.30 L848.91,178.09 L848.00,179.00 L847.21,178.44 L847.02,178.54 L846.82,178.62 L846.61,178.69 L846.45,179.65 L845.17,179.65 L845.01,178.69 L844.80,178.62 L844.60,178.54 L844.41,178.44 L843.62,179.00 L842.71,178.09 L843.27,177.30 L843.17,177.11 L843.09,176.91 L843.02,176.70 L842.06,176.54 L842.06,175.26 L843.02,175.10 L843.09,174.89 L843.17,174.69 L843.27,174.50 L842.71,173.71 L843.62,172.80 L844.41,173.36 L844.60,173.26 L844.80,173.18 L845.01,173.11 L845.17,172.15 L846.45,172.15 L846.61,173.11 L846.82,173.18 L847.02,173.26 L847.21,173.36 L848.00,172.80 L848.91,173.71 L848.35,174.50 L848.45,174.69 L848.53,174.89 Z" fill="#d2d2d2"/><circle cx="845.81" cy="175.90" r="1.2" fill="#fff"/><path transform="translate(852.51,172.80) scale(1.0)" d="M0.3,0 h5.3 v1.3 h-1 v2.4 l1.4,1 v1.1 h-2.4 v1.9 h-1 v-1.9 h-2.4 v-1.1 l1.4,-1 v-2.4 h-1 z" fill="#d2d2d2"/><path d="M404.66,237.39 L403.92,236.60 L403.21,235.78 L402.55,234.92 L401.94,234.02 L401.37,233.10 L400.86,232.15 L400.39,231.17 L399.97,230.17 L399.61,229.15 L399.31,228.11 L399.05,227.05 L398.85,225.99 L398.71,224.91 L398.63,223.83 L398.60,222.75 L398.63,221.67 L398.71,220.59 L398.85,219.51 L399.05,218.45 L399.31,217.39 L399.61,216.35 L399.97,215.33 L400.39,214.33 L400.86,213.35 L401.37,212.40 L401.94,211.48 L402.55,210.58 L403.21,209.72 L403.92,208.90 L404.66,208.11 L405.45,207.37 L406.27,206.66 L407.13,206.00 L408.03,205.39 L408.95,204.82 L409.90,204.31 L410.88,203.84 L411.88,203.42 L412.90,203.06 L413.94,202.76 L415.00,202.50 L416.06,202.30 L417.14,202.16 L418.22,202.08 L419.30,202.05 L420.38,202.08 L421.46,202.16 L422.54,202.30 L423.60,202.50 L424.66,202.76 L425.70,203.06 L426.72,203.42 L427.72,203.84 L428.70,204.31 L429.65,204.82 L430.57,205.39 L431.47,206.00 L432.33,206.66 L433.15,207.37 L433.94,208.11 L434.68,208.90 L435.39,209.72 L436.05,210.58 L436.66,211.48 L437.23,212.40 L437.74,213.35 L438.21,214.33 L438.63,215.33 L438.99,216.35 L439.29,217.39 L439.55,218.45 L439.75,219.51 L439.89,220.59 L439.97,221.67 L440.00,222.75 L439.97,223.83 L439.89,224.91 L439.75,225.99 L439.55,227.05 L439.29,228.11 L438.99,229.15 L438.63,230.17 L438.21,231.17 L437.74,232.15 L437.23,233.10 L436.66,234.02 L436.05,234.92 L435.39,235.78 L434.68,236.60 L433.94,237.39 L428.94,232.39 L429.30,231.75 L429.62,231.11 L429.90,230.45 L430.15,229.80 L430.36,229.14 L430.54,228.48 L430.69,227.82 L430.80,227.16 L430.88,226.51 L430.93,225.87 L430.95,225.23 L430.94,224.59 L430.90,223.97 L430.84,223.35 L430.75,222.75 L430.64,222.16 L430.50,221.57 L430.35,221.00 L430.16,220.44 L429.96,219.89 L429.74,219.36 L429.49,218.84 L429.23,218.33 L428.95,217.83 L428.65,217.35 L428.33,216.88 L428.00,216.43 L427.64,215.99 L427.28,215.57 L426.89,215.16 L426.49,214.77 L426.07,214.39 L425.64,214.03 L425.19,213.68 L424.73,213.35 L424.25,213.04 L423.75,212.75 L423.25,212.47 L422.72,212.22 L422.19,211.98 L421.63,211.77 L421.07,211.57 L420.49,211.40 L419.90,211.25 L419.30,211.13 L418.69,211.03 L418.06,210.96 L417.43,210.92 L416.78,210.90 L416.13,210.91 L415.47,210.96 L414.80,211.03 L414.13,211.14 L413.46,211.29 L412.78,211.46 L412.11,211.68 L411.44,211.93 L410.77,212.22 L410.11,212.55 L409.46,212.91 L408.82,213.32 L408.20,213.76 L407.59,214.25 L407.01,214.77 L406.45,215.33 L405.91,215.93 L405.40,216.56 L404.93,217.23 L404.49,217.94 L404.09,218.67 L403.73,219.44 L403.41,220.23 L403.14,221.05 L402.92,221.89 L402.75,222.75 L402.63,223.62 L402.56,224.51 L402.55,225.40 L402.60,226.30 L402.71,227.20 L402.87,228.09 L403.09,228.97 L403.37,229.84 L403.70,230.70 L404.09,231.53 L404.53,232.34 L405.03,233.12 L405.58,233.86 L406.17,234.57 L406.81,235.24 Z" fill="#b8c31c"/><line x1="417.46" y1="220.91" x2="433.94" y2="237.39" stroke="#5a5a5a" stroke-width="1.05"/><path d="M432.59,241.10 L433.55,241.26 L433.55,242.54 L432.59,242.70 L432.52,242.91 L432.44,243.11 L432.34,243.30 L432.90,244.09 L431.99,245.00 L431.20,244.44 L431.01,244.54 L430.81,244.62 L430.60,244.69 L430.44,245.65 L429.16,245.65 L429.00,244.69 L428.79,244.62 L428.59,244.54 L428.40,244.44 L427.61,245.00 L426.70,244.09 L427.26,243.30 L427.16,243.11 L427.08,242.91 L427.01,242.70 L426.05,242.54 L426.05,241.26 L427.01,241.10 L427.08,240.89 L427.16,240.69 L427.26,240.50 L426.70,239.71 L427.61,238.80 L428.40,239.36 L428.59,239.26 L428.79,239.18 L429.00,239.11 L429.16,238.15 L430.44,238.15 L430.60,239.11 L430.81,239.18 L431.01,239.26 L431.20,239.36 L431.99,238.80 L432.90,239.71 L432.34,240.50 L432.44,240.69 L432.52,240.89 Z" fill="#d2d2d2"/><circle cx="429.80" cy="241.90" r="1.2" fill="#fff"/><path transform="translate(436.50,238.80) scale(1.0)" d="M0.3,0 h5.3 v1.3 h-1 v2.4 l1.4,1 v1.1 h-2.4 v1.9 h-1 v-1.9 h-2.4 v-1.1 l1.4,-1 v-2.4 h-1 z" fill="#d2d2d2"/><path d="M543.33,237.39 L542.59,236.60 L541.88,235.78 L541.22,234.92 L540.61,234.02 L540.04,233.10 L539.53,232.15 L539.06,231.17 L538.64,230.17 L538.28,229.15 L537.98,228.11 L537.72,227.05 L537.52,225.99 L537.38,224.91 L537.30,223.83 L537.27,222.75 L537.30,221.67 L537.38,220.59 L537.52,219.51 L537.72,218.45 L537.98,217.39 L538.28,216.35 L538.64,215.33 L539.06,214.33 L539.53,213.35 L540.04,212.40 L540.61,211.48 L541.22,210.58 L541.88,209.72 L542.59,208.90 L543.33,208.11 L544.12,207.37 L544.94,206.66 L545.80,206.00 L546.70,205.39 L547.62,204.82 L548.57,204.31 L549.55,203.84 L550.55,203.42 L551.57,203.06 L552.61,202.76 L553.67,202.50 L554.73,202.30 L555.81,202.16 L556.89,202.08 L557.97,202.05 L559.05,202.08 L560.13,202.16 L561.21,202.30 L562.27,202.50 L563.33,202.76 L564.37,203.06 L565.39,203.42 L566.39,203.84 L567.37,204.31 L568.32,204.82 L569.24,205.39 L570.14,206.00 L571.00,206.66 L571.82,207.37 L572.61,208.11 L573.35,208.90 L574.06,209.72 L574.72,210.58 L575.33,211.48 L575.90,212.40 L576.41,213.35 L576.88,214.33 L577.30,215.33 L577.66,216.35 L577.96,217.39 L578.22,218.45 L578.42,219.51 L578.56,220.59 L578.64,221.67 L578.67,222.75 L578.64,223.83 L578.56,224.91 L578.42,225.99 L578.22,227.05 L577.96,228.11 L577.66,229.15 L577.30,230.17 L576.88,231.17 L576.41,232.15 L575.90,233.10 L575.33,234.02 L574.72,234.92 L574.06,235.78 L573.35,236.60 L572.61,237.39 L567.61,232.39 L567.97,231.75 L568.29,231.11 L568.57,230.45 L568.82,229.80 L569.03,229.14 L569.21,228.48 L569.36,227.82 L569.47,227.16 L569.55,226.51 L569.60,225.87 L569.62,225.23 L569.61,224.59 L569.57,223.97 L569.51,223.35 L569.42,222.75 L569.31,222.16 L569.17,221.57 L569.02,221.00 L568.83,220.44 L568.63,219.89 L568.41,219.36 L568.16,218.84 L567.90,218.33 L567.62,217.83 L567.32,217.35 L567.00,216.88 L566.67,216.43 L566.31,215.99 L565.95,215.57 L565.56,215.16 L565.16,214.77 L564.74,214.39 L564.31,214.03 L563.86,213.68 L563.40,213.35 L562.92,213.04 L562.42,212.75 L561.92,212.47 L561.39,212.22 L560.86,211.98 L560.30,211.77 L559.74,211.57 L559.16,211.40 L558.57,211.25 L557.97,211.13 L557.36,211.03 L556.73,210.96 L556.10,210.92 L555.45,210.90 L554.80,210.91 L554.14,210.96 L553.47,211.03 L552.80,211.14 L552.13,211.29 L551.45,211.46 L550.78,211.68 L550.11,211.93 L549.44,212.22 L548.78,212.55 L548.13,212.91 L547.49,213.32 L546.87,213.76 L546.26,214.25 L545.68,214.77 L545.12,215.33 L544.58,215.93 L544.07,216.56 L543.60,217.23 L543.16,217.94 L542.76,218.67 L542.40,219.44 L542.08,220.23 L541.81,221.05 L541.59,221.89 L541.42,222.75 L541.30,223.62 L541.23,224.51 L541.22,225.40 L541.27,226.30 L541.38,227.20 L541.54,228.09 L541.76,228.97 L542.04,229.84 L542.37,230.70 L542.76,231.53 L543.20,232.34 L543.70,233.12 L544.25,233.86 L544.84,234.57 L545.48,235.24 Z" fill="#b8c31c"/><line x1="556.13" y1="220.91" x2="572.61" y2="237.39" stroke="#5a5a5a" stroke-width="1.05"/><path d="M571.26,241.10 L572.22,241.26 L572.22,242.54 L571.26,242.70 L571.19,242.91 L571.11,243.11 L571.01,243.30 L571.57,244.09 L570.66,245.00 L569.87,244.44 L569.68,244.54 L569.48,244.62 L569.27,244.69 L569.11,245.65 L567.83,245.65 L567.67,244.69 L567.46,244.62 L567.26,244.54 L567.07,244.44 L566.28,245.00 L565.37,244.09 L565.93,243.30 L565.83,243.11 L565.75,242.91 L565.68,242.70 L564.72,242.54 L564.72,241.26 L565.68,241.10 L565.75,240.89 L565.83,240.69 L565.93,240.50 L565.37,239.71 L566.28,238.80 L567.07,239.36 L567.26,239.26 L567.46,239.18 L567.67,239.11 L567.83,238.15 L569.11,238.15 L569.27,239.11 L569.48,239.18 L569.68,239.26 L569.87,239.36 L570.66,238.80 L571.57,239.71 L571.01,240.50 L571.11,240.69 L571.19,240.89 Z" fill="#d2d2d2"/><circle cx="568.47" cy="241.90" r="1.2" fill="#fff"/><path transform="translate(575.17,238.80) scale(1.0)" d="M0.3,0 h5.3 v1.3 h-1 v2.4 l1.4,1 v1.1 h-2.4 v1.9 h-1 v-1.9 h-2.4 v-1.1 l1.4,-1 v-2.4 h-1 z" fill="#d2d2d2"/><path d="M682.00,237.39 L681.26,236.60 L680.55,235.78 L679.89,234.92 L679.28,234.02 L678.71,233.10 L678.20,232.15 L677.73,231.17 L677.31,230.17 L676.95,229.15 L676.65,228.11 L676.39,227.05 L676.19,225.99 L676.05,224.91 L675.97,223.83 L675.94,222.75 L675.97,221.67 L676.05,220.59 L676.19,219.51 L676.39,218.45 L676.65,217.39 L676.95,216.35 L677.31,215.33 L677.73,214.33 L678.20,213.35 L678.71,212.40 L679.28,211.48 L679.89,210.58 L680.55,209.72 L681.26,208.90 L682.00,208.11 L682.79,207.37 L683.61,206.66 L684.47,206.00 L685.37,205.39 L686.29,204.82 L687.24,204.31 L688.22,203.84 L689.22,203.42 L690.24,203.06 L691.28,202.76 L692.34,202.50 L693.40,202.30 L694.48,202.16 L695.56,202.08 L696.64,202.05 L697.72,202.08 L698.80,202.16 L699.88,202.30 L700.94,202.50 L702.00,202.76 L703.04,203.06 L704.06,203.42 L705.06,203.84 L706.04,204.31 L706.99,204.82 L707.91,205.39 L708.81,206.00 L709.67,206.66 L710.49,207.37 L711.28,208.11 L712.02,208.90 L712.73,209.72 L713.39,210.58 L714.00,211.48 L714.57,212.40 L715.08,213.35 L715.55,214.33 L715.97,215.33 L716.33,216.35 L716.63,217.39 L716.89,218.45 L717.09,219.51 L717.23,220.59 L717.31,221.67 L717.34,222.75 L717.31,223.83 L717.23,224.91 L717.09,225.99 L716.89,227.05 L716.63,228.11 L716.33,229.15 L715.97,230.17 L715.55,231.17 L715.08,232.15 L714.57,233.10 L714.00,234.02 L713.39,234.92 L712.73,235.78 L712.02,236.60 L711.28,237.39 L706.28,232.39 L706.64,231.75 L706.96,231.11 L707.24,230.45 L707.49,229.80 L707.70,229.14 L707.88,228.48 L708.03,227.82 L708.14,227.16 L708.22,226.51 L708.27,225.87 L708.29,225.23 L708.28,224.59 L708.24,223.97 L708.18,223.35 L708.09,222.75 L707.98,222.16 L707.84,221.57 L707.69,221.00 L707.50,220.44 L707.30,219.89 L707.08,219.36 L706.83,218.84 L706.57,218.33 L706.29,217.83 L705.99,217.35 L705.67,216.88 L705.34,216.43 L704.98,215.99 L704.62,215.57 L704.23,215.16 L703.83,214.77 L703.41,214.39 L702.98,214.03 L702.53,213.68 L702.07,213.35 L701.59,213.04 L701.09,212.75 L700.59,212.47 L700.06,212.22 L699.53,211.98 L698.97,211.77 L698.41,211.57 L697.83,211.40 L697.24,211.25 L696.64,211.13 L696.03,211.03 L695.40,210.96 L694.77,210.92 L694.12,210.90 L693.47,210.91 L692.81,210.96 L692.14,211.03 L691.47,211.14 L690.80,211.29 L690.12,211.46 L689.45,211.68 L688.78,211.93 L688.11,212.22 L687.45,212.55 L686.80,212.91 L686.16,213.32 L685.54,213.76 L684.93,214.25 L684.35,214.77 L683.79,215.33 L683.25,215.93 L682.74,216.56 L682.27,217.23 L681.83,217.94 L681.43,218.67 L681.07,219.44 L680.75,220.23 L680.48,221.05 L680.26,221.89 L680.09,222.75 L679.97,223.62 L679.90,224.51 L679.89,225.40 L679.94,226.30 L680.05,227.20 L680.21,228.09 L680.43,228.97 L680.71,229.84 L681.04,230.70 L681.43,231.53 L681.87,232.34 L682.37,233.12 L682.92,233.86 L683.51,234.57 L684.15,235.24 Z" fill="#b8c31c"/><line x1="694.80" y1="220.91" x2="711.28" y2="237.39" stroke="#5a5a5a" stroke-width="1.05"/><path d="M709.93,241.10 L710.89,241.26 L710.89,242.54 L709.93,242.70 L709.86,242.91 L709.78,243.11 L709.68,243.30 L710.24,244.09 L709.33,245.00 L708.54,244.44 L708.35,244.54 L708.15,244.62 L707.94,244.69 L707.78,245.65 L706.50,245.65 L706.34,244.69 L706.13,244.62 L705.93,244.54 L705.74,244.44 L704.95,245.00 L704.04,244.09 L704.60,243.30 L704.50,243.11 L704.42,242.91 L704.35,242.70 L703.39,242.54 L703.39,241.26 L704.35,241.10 L704.42,240.89 L704.50,240.69 L704.60,240.50 L704.04,239.71 L704.95,238.80 L705.74,239.36 L705.93,239.26 L706.13,239.18 L706.34,239.11 L706.50,238.15 L707.78,238.15 L707.94,239.11 L708.15,239.18 L708.35,239.26 L708.54,239.36 L709.33,238.80 L710.24,239.71 L709.68,240.50 L709.78,240.69 L709.86,240.89 Z" fill="#d2d2d2"/><circle cx="707.14" cy="241.90" r="1.2" fill="#fff"/><path transform="translate(713.84,238.80) scale(1.0)" d="M0.3,0 h5.3 v1.3 h-1 v2.4 l1.4,1 v1.1 h-2.4 v1.9 h-1 v-1.9 h-2.4 v-1.1 l1.4,-1 v-2.4 h-1 z" fill="#d2d2d2"/><path d="M820.67,237.39 L819.93,236.60 L819.22,235.78 L818.56,234.92 L817.95,234.02 L817.38,233.10 L816.87,232.15 L816.40,231.17 L815.98,230.17 L815.62,229.15 L815.32,228.11 L815.06,227.05 L814.86,225.99 L814.72,224.91 L814.64,223.83 L814.61,222.75 L814.64,221.67 L814.72,220.59 L814.86,219.51 L815.06,218.45 L815.32,217.39 L815.62,216.35 L815.98,215.33 L816.40,214.33 L816.87,213.35 L817.38,212.40 L817.95,211.48 L818.56,210.58 L819.22,209.72 L819.93,208.90 L820.67,208.11 L821.46,207.37 L822.28,206.66 L823.14,206.00 L824.04,205.39 L824.96,204.82 L825.91,204.31 L826.89,203.84 L827.89,203.42 L828.91,203.06 L829.95,202.76 L831.01,202.50 L832.07,202.30 L833.15,202.16 L834.23,202.08 L835.31,202.05 L836.39,202.08 L837.47,202.16 L838.55,202.30 L839.61,202.50 L840.67,202.76 L841.71,203.06 L842.73,203.42 L843.73,203.84 L844.71,204.31 L845.66,204.82 L846.58,205.39 L847.48,206.00 L848.34,206.66 L849.16,207.37 L849.95,208.11 L850.69,208.90 L851.40,209.72 L852.06,210.58 L852.67,211.48 L853.24,212.40 L853.75,213.35 L854.22,214.33 L854.64,215.33 L855.00,216.35 L855.30,217.39 L855.56,218.45 L855.76,219.51 L855.90,220.59 L855.98,221.67 L856.01,222.75 L855.98,223.83 L855.90,224.91 L855.76,225.99 L855.56,227.05 L855.30,228.11 L855.00,229.15 L854.64,230.17 L854.22,231.17 L853.75,232.15 L853.24,233.10 L852.67,234.02 L852.06,234.92 L851.40,235.78 L850.69,236.60 L849.95,237.39 L844.95,232.39 L845.31,231.75 L845.63,231.11 L845.91,230.45 L846.16,229.80 L846.37,229.14 L846.55,228.48 L846.70,227.82 L846.81,227.16 L846.89,226.51 L846.94,225.87 L846.96,225.23 L846.95,224.59 L846.91,223.97 L846.85,223.35 L846.76,222.75 L846.65,222.16 L846.51,221.57 L846.36,221.00 L846.17,220.44 L845.97,219.89 L845.75,219.36 L845.50,218.84 L845.24,218.33 L844.96,217.83 L844.66,217.35 L844.34,216.88 L844.01,216.43 L843.65,215.99 L843.29,215.57 L842.90,215.16 L842.50,214.77 L842.08,214.39 L841.65,214.03 L841.20,213.68 L840.74,213.35 L840.26,213.04 L839.76,212.75 L839.26,212.47 L838.73,212.22 L838.20,211.98 L837.64,211.77 L837.08,211.57 L836.50,211.40 L835.91,211.25 L835.31,211.13 L834.70,211.03 L834.07,210.96 L833.44,210.92 L832.79,210.90 L832.14,210.91 L831.48,210.96 L830.81,211.03 L830.14,211.14 L829.47,211.29 L828.79,211.46 L828.12,211.68 L827.45,211.93 L826.78,212.22 L826.12,212.55 L825.47,212.91 L824.83,213.32 L824.21,213.76 L823.60,214.25 L823.02,214.77 L822.46,215.33 L821.92,215.93 L821.41,216.56 L820.94,217.23 L820.50,217.94 L820.10,218.67 L819.74,219.44 L819.42,220.23 L819.15,221.05 L818.93,221.89 L818.76,222.75 L818.64,223.62 L818.57,224.51 L818.56,225.40 L818.61,226.30 L818.72,227.20 L818.88,228.09 L819.10,228.97 L819.38,229.84 L819.71,230.70 L820.10,231.53 L820.54,232.34 L821.04,233.12 L821.59,233.86 L822.18,234.57 L822.82,235.24 Z" fill="#b8c31c"/><line x1="833.47" y1="220.91" x2="849.95" y2="237.39" stroke="#5a5a5a" stroke-width="1.05"/><path d="M848.60,241.10 L849.56,241.26 L849.56,242.54 L848.60,242.70 L848.53,242.91 L848.45,243.11 L848.35,243.30 L848.91,244.09 L848.00,245.00 L847.21,244.44 L847.02,244.54 L846.82,244.62 L846.61,244.69 L846.45,245.65 L845.17,245.65 L845.01,244.69 L844.80,244.62 L844.60,244.54 L844.41,244.44 L843.62,245.00 L842.71,244.09 L843.27,243.30 L843.17,243.11 L843.09,242.91 L843.02,242.70 L842.06,242.54 L842.06,241.26 L843.02,241.10 L843.09,240.89 L843.17,240.69 L843.27,240.50 L842.71,239.71 L843.62,238.80 L844.41,239.36 L844.60,239.26 L844.80,239.18 L845.01,239.11 L845.17,238.15 L846.45,238.15 L846.61,239.11 L846.82,239.18 L847.02,239.26 L847.21,239.36 L848.00,238.80 L848.91,239.71 L848.35,240.50 L848.45,240.69 L848.53,240.89 Z" fill="#d2d2d2"/><circle cx="845.81" cy="241.90" r="1.2" fill="#fff"/><path transform="translate(852.51,238.80) scale(1.0)" d="M0.3,0 h5.3 v1.3 h-1 v2.4 l1.4,1 v1.1 h-2.4 v1.9 h-1 v-1.9 h-2.4 v-1.1 l1.4,-1 v-2.4 h-1 z" fill="#d2d2d2"/><path d="M404.66,302.89 L403.92,302.10 L403.21,301.28 L402.55,300.42 L401.94,299.52 L401.37,298.60 L400.86,297.65 L400.39,296.67 L399.97,295.67 L399.61,294.65 L399.31,293.61 L399.05,292.55 L398.85,291.49 L398.71,290.41 L398.63,289.33 L398.60,288.25 L398.63,287.17 L398.71,286.09 L398.85,285.01 L399.05,283.95 L399.31,282.89 L399.61,281.85 L399.97,280.83 L400.39,279.83 L400.86,278.85 L401.37,277.90 L401.94,276.98 L402.55,276.08 L403.21,275.22 L403.92,274.40 L404.66,273.61 L405.45,272.87 L406.27,272.16 L407.13,271.50 L408.03,270.89 L408.95,270.32 L409.90,269.81 L410.88,269.34 L411.88,268.92 L412.90,268.56 L413.94,268.26 L415.00,268.00 L416.06,267.80 L417.14,267.66 L418.22,267.58 L419.30,267.55 L420.38,267.58 L421.46,267.66 L422.54,267.80 L423.60,268.00 L424.66,268.26 L425.70,268.56 L426.72,268.92 L427.72,269.34 L428.70,269.81 L429.65,270.32 L430.57,270.89 L431.47,271.50 L432.33,272.16 L433.15,272.87 L433.94,273.61 L434.68,274.40 L435.39,275.22 L436.05,276.08 L436.66,276.98 L437.23,277.90 L437.74,278.85 L438.21,279.83 L438.63,280.83 L438.99,281.85 L439.29,282.89 L439.55,283.95 L439.75,285.01 L439.89,286.09 L439.97,287.17 L440.00,288.25 L439.97,289.33 L439.89,290.41 L439.75,291.49 L439.55,292.55 L439.29,293.61 L438.99,294.65 L438.63,295.67 L438.21,296.67 L437.74,297.65 L437.23,298.60 L436.66,299.52 L436.05,300.42 L435.39,301.28 L434.68,302.10 L433.94,302.89 L428.94,297.89 L429.30,297.25 L429.62,296.61 L429.90,295.95 L430.15,295.30 L430.36,294.64 L430.54,293.98 L430.69,293.32 L430.80,292.66 L430.88,292.01 L430.93,291.37 L430.95,290.73 L430.94,290.09 L430.90,289.47 L430.84,288.85 L430.75,288.25 L430.64,287.66 L430.50,287.07 L430.35,286.50 L430.16,285.94 L429.96,285.39 L429.74,284.86 L429.49,284.34 L429.23,283.83 L428.95,283.33 L428.65,282.85 L428.33,282.38 L428.00,281.93 L427.64,281.49 L427.28,281.07 L426.89,280.66 L426.49,280.27 L426.07,279.89 L425.64,279.53 L425.19,279.18 L424.73,278.85 L424.25,278.54 L423.75,278.25 L423.25,277.97 L422.72,277.72 L422.19,277.48 L421.63,277.27 L421.07,277.07 L420.49,276.90 L419.90,276.75 L419.30,276.63 L418.69,276.53 L418.06,276.46 L417.43,276.42 L416.78,276.40 L416.13,276.41 L415.47,276.46 L414.80,276.53 L414.13,276.64 L413.46,276.79 L412.78,276.96 L412.11,277.18 L411.44,277.43 L410.77,277.72 L410.11,278.05 L409.46,278.41 L408.82,278.82 L408.20,279.26 L407.59,279.75 L407.01,280.27 L406.45,280.83 L405.91,281.43 L405.40,282.06 L404.93,282.73 L404.49,283.44 L404.09,284.17 L403.73,284.94 L403.41,285.73 L403.14,286.55 L402.92,287.39 L402.75,288.25 L402.63,289.12 L402.56,290.01 L402.55,290.90 L402.60,291.80 L402.71,292.70 L402.87,293.59 L403.09,294.47 L403.37,295.34 L403.70,296.20 L404.09,297.03 L404.53,297.84 L405.03,298.62 L405.58,299.36 L406.17,300.07 L406.81,300.74 Z" fill="#b8c31c"/><line x1="417.46" y1="286.41" x2="433.94" y2="302.89" stroke="#5a5a5a" stroke-width="1.05"/><path d="M432.59,306.10 L433.55,306.26 L433.55,307.54 L432.59,307.70 L432.52,307.91 L432.44,308.11 L432.34,308.30 L432.90,309.09 L431.99,310.00 L431.20,309.44 L431.01,309.54 L430.81,309.62 L430.60,309.69 L430.44,310.65 L429.16,310.65 L429.00,309.69 L428.79,309.62 L428.59,309.54 L428.40,309.44 L427.61,310.00 L426.70,309.09 L427.26,308.30 L427.16,308.11 L427.08,307.91 L427.01,307.70 L426.05,307.54 L426.05,306.26 L427.01,306.10 L427.08,305.89 L427.16,305.69 L427.26,305.50 L426.70,304.71 L427.61,303.80 L428.40,304.36 L428.59,304.26 L428.79,304.18 L429.00,304.11 L429.16,303.15 L430.44,303.15 L430.60,304.11 L430.81,304.18 L431.01,304.26 L431.20,304.36 L431.99,303.80 L432.90,304.71 L432.34,305.50 L432.44,305.69 L432.52,305.89 Z" fill="#d2d2d2"/><circle cx="429.80" cy="306.90" r="1.2" fill="#fff"/><path transform="translate(436.50,303.80) scale(1.0)" d="M0.3,0 h5.3 v1.3 h-1 v2.4 l1.4,1 v1.1 h-2.4 v1.9 h-1 v-1.9 h-2.4 v-1.1 l1.4,-1 v-2.4 h-1 z" fill="#d2d2d2"/><path d="M544.33,302.89 L543.59,302.10 L542.88,301.28 L542.22,300.42 L541.61,299.52 L541.04,298.60 L540.53,297.65 L540.06,296.67 L539.64,295.67 L539.28,294.65 L538.98,293.61 L538.72,292.55 L538.52,291.49 L538.38,290.41 L538.30,289.33 L538.27,288.25 L538.30,287.17 L538.38,286.09 L538.52,285.01 L538.72,283.95 L538.98,282.89 L539.28,281.85 L539.64,280.83 L540.06,279.83 L540.53,278.85 L541.04,277.90 L541.61,276.98 L542.22,276.08 L542.88,275.22 L543.59,274.40 L544.33,273.61 L545.12,272.87 L545.94,272.16 L546.80,271.50 L547.70,270.89 L548.62,270.32 L549.57,269.81 L550.55,269.34 L551.55,268.92 L552.57,268.56 L553.61,268.26 L554.67,268.00 L555.73,267.80 L556.81,267.66 L557.89,267.58 L558.97,267.55 L560.05,267.58 L561.13,267.66 L562.21,267.80 L563.27,268.00 L564.33,268.26 L565.37,268.56 L566.39,268.92 L567.39,269.34 L568.37,269.81 L569.32,270.32 L570.24,270.89 L571.14,271.50 L572.00,272.16 L572.82,272.87 L573.61,273.61 L574.35,274.40 L575.06,275.22 L575.72,276.08 L576.33,276.98 L576.90,277.90 L577.41,278.85 L577.88,279.83 L578.30,280.83 L578.66,281.85 L578.96,282.89 L579.22,283.95 L579.42,285.01 L579.56,286.09 L579.64,287.17 L579.67,288.25 L579.64,289.33 L579.56,290.41 L579.42,291.49 L579.22,292.55 L578.96,293.61 L578.66,294.65 L578.30,295.67 L577.88,296.67 L577.41,297.65 L576.90,298.60 L576.33,299.52 L575.72,300.42 L575.06,301.28 L574.35,302.10 L573.61,302.89 L568.61,297.89 L568.97,297.25 L569.29,296.61 L569.57,295.95 L569.82,295.30 L570.03,294.64 L570.21,293.98 L570.36,293.32 L570.47,292.66 L570.55,292.01 L570.60,291.37 L570.62,290.73 L570.61,290.09 L570.57,289.47 L570.51,288.85 L570.42,288.25 L570.31,287.66 L570.17,287.07 L570.02,286.50 L569.83,285.94 L569.63,285.39 L569.41,284.86 L569.16,284.34 L568.90,283.83 L568.62,283.33 L568.32,282.85 L568.00,282.38 L567.67,281.93 L567.31,281.49 L566.95,281.07 L566.56,280.66 L566.16,280.27 L565.74,279.89 L565.31,279.53 L564.86,279.18 L564.40,278.85 L563.92,278.54 L563.42,278.25 L562.92,277.97 L562.39,277.72 L561.86,277.48 L561.30,277.27 L560.74,277.07 L560.16,276.90 L559.57,276.75 L558.97,276.63 L558.36,276.53 L557.73,276.46 L557.10,276.42 L556.45,276.40 L555.80,276.41 L555.14,276.46 L554.47,276.53 L553.80,276.64 L553.13,276.79 L552.45,276.96 L551.78,277.18 L551.11,277.43 L550.44,277.72 L549.78,278.05 L549.13,278.41 L548.49,278.82 L547.87,279.26 L547.26,279.75 L546.68,280.27 L546.12,280.83 L545.58,281.43 L545.07,282.06 L544.60,282.73 L544.16,283.44 L543.76,284.17 L543.40,284.94 L543.08,285.73 L542.81,286.55 L542.59,287.39 L542.42,288.25 L542.30,289.12 L542.23,290.01 L542.22,290.90 L542.27,291.80 L542.38,292.70 L542.54,293.59 L542.76,294.47 L543.04,295.34 L543.37,296.20 L543.76,297.03 L544.20,297.84 L544.70,298.62 L545.25,299.36 L545.84,300.07 L546.48,300.74 Z" fill="#b8c31c"/><line x1="557.13" y1="286.41" x2="573.61" y2="302.89" stroke="#5a5a5a" stroke-width="1.05"/><path d="M572.26,306.10 L573.22,306.26 L573.22,307.54 L572.26,307.70 L572.19,307.91 L572.11,308.11 L572.01,308.30 L572.57,309.09 L571.66,310.00 L570.87,309.44 L570.68,309.54 L570.48,309.62 L570.27,309.69 L570.11,310.65 L568.83,310.65 L568.67,309.69 L568.46,309.62 L568.26,309.54 L568.07,309.44 L567.28,310.00 L566.37,309.09 L566.93,308.30 L566.83,308.11 L566.75,307.91 L566.68,307.70 L565.72,307.54 L565.72,306.26 L566.68,306.10 L566.75,305.89 L566.83,305.69 L566.93,305.50 L566.37,304.71 L567.28,303.80 L568.07,304.36 L568.26,304.26 L568.46,304.18 L568.67,304.11 L568.83,303.15 L570.11,303.15 L570.27,304.11 L570.48,304.18 L570.68,304.26 L570.87,304.36 L571.66,303.80 L572.57,304.71 L572.01,305.50 L572.11,305.69 L572.19,305.89 Z" fill="#d2d2d2"/><circle cx="569.47" cy="306.90" r="1.2" fill="#fff"/><path transform="translate(576.17,303.80) scale(1.0)" d="M0.3,0 h5.3 v1.3 h-1 v2.4 l1.4,1 v1.1 h-2.4 v1.9 h-1 v-1.9 h-2.4 v-1.1 l1.4,-1 v-2.4 h-1 z" fill="#d2d2d2"/><path d="M104.3,384 h7 l-3.5,3.4 z" fill="#111"/><path d="M262.4,382.1 h7.8 l-3.9,-3.9 z M262.4,383.5 h7.8 l-3.9,3.9 z" fill="#d2d2d2"/><path d="M414.4,382.1 h7.8 l-3.9,-3.9 z M414.4,383.5 h7.8 l-3.9,3.9 z" fill="#d2d2d2"/><path d="M580.8,382.1 h7.8 l-3.9,-3.9 z M580.8,383.5 h7.8 l-3.9,3.9 z" fill="#d2d2d2"/><path d="M742.9,382.1 h7.8 l-3.9,-3.9 z M742.9,383.5 h7.8 l-3.9,3.9 z" fill="#d2d2d2"/><path d="M831.78,405.52 L832.64,405.72 L832.64,407.08 L831.78,407.28 L831.70,407.51 L831.61,407.73 L831.50,407.95 L831.97,408.71 L831.01,409.67 L830.25,409.20 L830.03,409.31 L829.81,409.40 L829.58,409.48 L829.38,410.34 L828.02,410.34 L827.82,409.48 L827.59,409.40 L827.37,409.31 L827.15,409.20 L826.39,409.67 L825.43,408.71 L825.90,407.95 L825.79,407.73 L825.70,407.51 L825.62,407.28 L824.76,407.08 L824.76,405.72 L825.62,405.52 L825.70,405.29 L825.79,405.07 L825.90,404.85 L825.43,404.09 L826.39,403.13 L827.15,403.60 L827.37,403.49 L827.59,403.40 L827.82,403.32 L828.02,402.46 L829.38,402.46 L829.58,403.32 L829.81,403.40 L830.03,403.49 L830.25,403.60 L831.01,403.13 L831.97,404.09 L831.50,404.85 L831.61,405.07 L831.70,405.29 Z" fill="#3a3a3a"/><circle cx="828.70" cy="406.40" r="1.6" fill="#fff"/><path d="M825.18,411.05 L825.84,411.15 L825.84,412.25 L825.18,412.35 L825.10,412.55 L824.99,412.74 L824.86,412.92 L825.09,413.54 L824.15,414.09 L823.73,413.57 L823.51,413.60 L823.29,413.60 L823.07,413.57 L822.65,414.09 L821.71,413.54 L821.94,412.92 L821.81,412.74 L821.70,412.55 L821.62,412.35 L820.96,412.25 L820.96,411.15 L821.62,411.05 L821.70,410.85 L821.81,410.66 L821.94,410.48 L821.71,409.86 L822.65,409.31 L823.07,409.83 L823.29,409.80 L823.51,409.80 L823.73,409.83 L824.15,409.31 L825.09,409.86 L824.86,410.48 L824.99,410.66 L825.10,410.85 Z" fill="#3a3a3a"/><circle cx="823.40" cy="411.70" r="0.75" fill="#fff"/><path d="M831.78,432.52 L832.64,432.72 L832.64,434.08 L831.78,434.28 L831.70,434.51 L831.61,434.73 L831.50,434.95 L831.97,435.71 L831.01,436.67 L830.25,436.20 L830.03,436.31 L829.81,436.40 L829.58,436.48 L829.38,437.34 L828.02,437.34 L827.82,436.48 L827.59,436.40 L827.37,436.31 L827.15,436.20 L826.39,436.67 L825.43,435.71 L825.90,434.95 L825.79,434.73 L825.70,434.51 L825.62,434.28 L824.76,434.08 L824.76,432.72 L825.62,432.52 L825.70,432.29 L825.79,432.07 L825.90,431.85 L825.43,431.09 L826.39,430.13 L827.15,430.60 L827.37,430.49 L827.59,430.40 L827.82,430.32 L828.02,429.46 L829.38,429.46 L829.58,430.32 L829.81,430.40 L830.03,430.49 L830.25,430.60 L831.01,430.13 L831.97,431.09 L831.50,431.85 L831.61,432.07 L831.70,432.29 Z" fill="#3a3a3a"/><circle cx="828.70" cy="433.40" r="1.6" fill="#fff"/><path d="M825.18,438.05 L825.84,438.15 L825.84,439.25 L825.18,439.35 L825.10,439.55 L824.99,439.74 L824.86,439.92 L825.09,440.54 L824.15,441.09 L823.73,440.57 L823.51,440.60 L823.29,440.60 L823.07,440.57 L822.65,441.09 L821.71,440.54 L821.94,439.92 L821.81,439.74 L821.70,439.55 L821.62,439.35 L820.96,439.25 L820.96,438.15 L821.62,438.05 L821.70,437.85 L821.81,437.66 L821.94,437.48 L821.71,436.86 L822.65,436.31 L823.07,436.83 L823.29,436.80 L823.51,436.80 L823.73,436.83 L824.15,436.31 L825.09,436.86 L824.86,437.48 L824.99,437.66 L825.10,437.85 Z" fill="#3a3a3a"/><circle cx="823.40" cy="438.70" r="0.75" fill="#fff"/><path d="M831.78,459.52 L832.64,459.72 L832.64,461.08 L831.78,461.28 L831.70,461.51 L831.61,461.73 L831.50,461.95 L831.97,462.71 L831.01,463.67 L830.25,463.20 L830.03,463.31 L829.81,463.40 L829.58,463.48 L829.38,464.34 L828.02,464.34 L827.82,463.48 L827.59,463.40 L827.37,463.31 L827.15,463.20 L826.39,463.67 L825.43,462.71 L825.90,461.95 L825.79,461.73 L825.70,461.51 L825.62,461.28 L824.76,461.08 L824.76,459.72 L825.62,459.52 L825.70,459.29 L825.79,459.07 L825.90,458.85 L825.43,458.09 L826.39,457.13 L827.15,457.60 L827.37,457.49 L827.59,457.40 L827.82,457.32 L828.02,456.46 L829.38,456.46 L829.58,457.32 L829.81,457.40 L830.03,457.49 L830.25,457.60 L831.01,457.13 L831.97,458.09 L831.50,458.85 L831.61,459.07 L831.70,459.29 Z" fill="#3a3a3a"/><circle cx="828.70" cy="460.40" r="1.6" fill="#fff"/><path d="M825.18,465.05 L825.84,465.15 L825.84,466.25 L825.18,466.35 L825.10,466.55 L824.99,466.74 L824.86,466.92 L825.09,467.54 L824.15,468.09 L823.73,467.57 L823.51,467.60 L823.29,467.60 L823.07,467.57 L822.65,468.09 L821.71,467.54 L821.94,466.92 L821.81,466.74 L821.70,466.55 L821.62,466.35 L820.96,466.25 L820.96,465.15 L821.62,465.05 L821.70,464.85 L821.81,464.66 L821.94,464.48 L821.71,463.86 L822.65,463.31 L823.07,463.83 L823.29,463.80 L823.51,463.80 L823.73,463.83 L824.15,463.31 L825.09,463.86 L824.86,464.48 L824.99,464.66 L825.10,464.85 Z" fill="#3a3a3a"/><circle cx="823.40" cy="465.70" r="0.75" fill="#fff"/><path d="M831.78,486.52 L832.64,486.72 L832.64,488.08 L831.78,488.28 L831.70,488.51 L831.61,488.73 L831.50,488.95 L831.97,489.71 L831.01,490.67 L830.25,490.20 L830.03,490.31 L829.81,490.40 L829.58,490.48 L829.38,491.34 L828.02,491.34 L827.82,490.48 L827.59,490.40 L827.37,490.31 L827.15,490.20 L826.39,490.67 L825.43,489.71 L825.90,488.95 L825.79,488.73 L825.70,488.51 L825.62,488.28 L824.76,488.08 L824.76,486.72 L825.62,486.52 L825.70,486.29 L825.79,486.07 L825.90,485.85 L825.43,485.09 L826.39,484.13 L827.15,484.60 L827.37,484.49 L827.59,484.40 L827.82,484.32 L828.02,483.46 L829.38,483.46 L829.58,484.32 L829.81,484.40 L830.03,484.49 L830.25,484.60 L831.01,484.13 L831.97,485.09 L831.50,485.85 L831.61,486.07 L831.70,486.29 Z" fill="#3a3a3a"/><circle cx="828.70" cy="487.40" r="1.6" fill="#fff"/><path d="M825.18,492.05 L825.84,492.15 L825.84,493.25 L825.18,493.35 L825.10,493.55 L824.99,493.74 L824.86,493.92 L825.09,494.54 L824.15,495.09 L823.73,494.57 L823.51,494.60 L823.29,494.60 L823.07,494.57 L822.65,495.09 L821.71,494.54 L821.94,493.92 L821.81,493.74 L821.70,493.55 L821.62,493.35 L820.96,493.25 L820.96,492.15 L821.62,492.05 L821.70,491.85 L821.81,491.66 L821.94,491.48 L821.71,490.86 L822.65,490.31 L823.07,490.83 L823.29,490.80 L823.51,490.80 L823.73,490.83 L824.15,490.31 L825.09,490.86 L824.86,491.48 L824.99,491.66 L825.10,491.85 Z" fill="#3a3a3a"/><circle cx="823.40" cy="492.70" r="0.75" fill="#fff"/><path d="M831.78,513.52 L832.64,513.72 L832.64,515.08 L831.78,515.28 L831.70,515.51 L831.61,515.73 L831.50,515.95 L831.97,516.71 L831.01,517.67 L830.25,517.20 L830.03,517.31 L829.81,517.40 L829.58,517.48 L829.38,518.34 L828.02,518.34 L827.82,517.48 L827.59,517.40 L827.37,517.31 L827.15,517.20 L826.39,517.67 L825.43,516.71 L825.90,515.95 L825.79,515.73 L825.70,515.51 L825.62,515.28 L824.76,515.08 L824.76,513.72 L825.62,513.52 L825.70,513.29 L825.79,513.07 L825.90,512.85 L825.43,512.09 L826.39,511.13 L827.15,511.60 L827.37,511.49 L827.59,511.40 L827.82,511.32 L828.02,510.46 L829.38,510.46 L829.58,511.32 L829.81,511.40 L830.03,511.49 L830.25,511.60 L831.01,511.13 L831.97,512.09 L831.50,512.85 L831.61,513.07 L831.70,513.29 Z" fill="#3a3a3a"/><circle cx="828.70" cy="514.40" r="1.6" fill="#fff"/><path d="M825.18,519.05 L825.84,519.15 L825.84,520.25 L825.18,520.35 L825.10,520.55 L824.99,520.74 L824.86,520.92 L825.09,521.54 L824.15,522.09 L823.73,521.57 L823.51,521.60 L823.29,521.60 L823.07,521.57 L822.65,522.09 L821.71,521.54 L821.94,520.92 L821.81,520.74 L821.70,520.55 L821.62,520.35 L820.96,520.25 L820.96,519.15 L821.62,519.05 L821.70,518.85 L821.81,518.66 L821.94,518.48 L821.71,517.86 L822.65,517.31 L823.07,517.83 L823.29,517.80 L823.51,517.80 L823.73,517.83 L824.15,517.31 L825.09,517.86 L824.86,518.48 L824.99,518.66 L825.10,518.85 Z" fill="#3a3a3a"/><circle cx="823.40" cy="519.70" r="0.75" fill="#fff"/><path d="M831.78,540.52 L832.64,540.72 L832.64,542.08 L831.78,542.28 L831.70,542.51 L831.61,542.73 L831.50,542.95 L831.97,543.71 L831.01,544.67 L830.25,544.20 L830.03,544.31 L829.81,544.40 L829.58,544.48 L829.38,545.34 L828.02,545.34 L827.82,544.48 L827.59,544.40 L827.37,544.31 L827.15,544.20 L826.39,544.67 L825.43,543.71 L825.90,542.95 L825.79,542.73 L825.70,542.51 L825.62,542.28 L824.76,542.08 L824.76,540.72 L825.62,540.52 L825.70,540.29 L825.79,540.07 L825.90,539.85 L825.43,539.09 L826.39,538.13 L827.15,538.60 L827.37,538.49 L827.59,538.40 L827.82,538.32 L828.02,537.46 L829.38,537.46 L829.58,538.32 L829.81,538.40 L830.03,538.49 L830.25,538.60 L831.01,538.13 L831.97,539.09 L831.50,539.85 L831.61,540.07 L831.70,540.29 Z" fill="#3a3a3a"/><circle cx="828.70" cy="541.40" r="1.6" fill="#fff"/><path d="M825.18,546.05 L825.84,546.15 L825.84,547.25 L825.18,547.35 L825.10,547.55 L824.99,547.74 L824.86,547.92 L825.09,548.54 L824.15,549.09 L823.73,548.57 L823.51,548.60 L823.29,548.60 L823.07,548.57 L822.65,549.09 L821.71,548.54 L821.94,547.92 L821.81,547.74 L821.70,547.55 L821.62,547.35 L820.96,547.25 L820.96,546.15 L821.62,546.05 L821.70,545.85 L821.81,545.66 L821.94,545.48 L821.71,544.86 L822.65,544.31 L823.07,544.83 L823.29,544.80 L823.51,544.80 L823.73,544.83 L824.15,544.31 L825.09,544.86 L824.86,545.48 L824.99,545.66 L825.10,545.85 Z" fill="#3a3a3a"/><circle cx="823.40" cy="546.70" r="0.75" fill="#fff"/><path d="M831.78,567.52 L832.64,567.72 L832.64,569.08 L831.78,569.28 L831.70,569.51 L831.61,569.73 L831.50,569.95 L831.97,570.71 L831.01,571.67 L830.25,571.20 L830.03,571.31 L829.81,571.40 L829.58,571.48 L829.38,572.34 L828.02,572.34 L827.82,571.48 L827.59,571.40 L827.37,571.31 L827.15,571.20 L826.39,571.67 L825.43,570.71 L825.90,569.95 L825.79,569.73 L825.70,569.51 L825.62,569.28 L824.76,569.08 L824.76,567.72 L825.62,567.52 L825.70,567.29 L825.79,567.07 L825.90,566.85 L825.43,566.09 L826.39,565.13 L827.15,565.60 L827.37,565.49 L827.59,565.40 L827.82,565.32 L828.02,564.46 L829.38,564.46 L829.58,565.32 L829.81,565.40 L830.03,565.49 L830.25,565.60 L831.01,565.13 L831.97,566.09 L831.50,566.85 L831.61,567.07 L831.70,567.29 Z" fill="#3a3a3a"/><circle cx="828.70" cy="568.40" r="1.6" fill="#fff"/><path d="M825.18,573.05 L825.84,573.15 L825.84,574.25 L825.18,574.35 L825.10,574.55 L824.99,574.74 L824.86,574.92 L825.09,575.54 L824.15,576.09 L823.73,575.57 L823.51,575.60 L823.29,575.60 L823.07,575.57 L822.65,576.09 L821.71,575.54 L821.94,574.92 L821.81,574.74 L821.70,574.55 L821.62,574.35 L820.96,574.25 L820.96,573.15 L821.62,573.05 L821.70,572.85 L821.81,572.66 L821.94,572.48 L821.71,571.86 L822.65,571.31 L823.07,571.83 L823.29,571.80 L823.51,571.80 L823.73,571.83 L824.15,571.31 L825.09,571.86 L824.86,572.48 L824.99,572.66 L825.10,572.85 Z" fill="#3a3a3a"/><circle cx="823.40" cy="573.70" r="0.75" fill="#fff"/><path d="M831.78,594.52 L832.64,594.72 L832.64,596.08 L831.78,596.28 L831.70,596.51 L831.61,596.73 L831.50,596.95 L831.97,597.71 L831.01,598.67 L830.25,598.20 L830.03,598.31 L829.81,598.40 L829.58,598.48 L829.38,599.34 L828.02,599.34 L827.82,598.48 L827.59,598.40 L827.37,598.31 L827.15,598.20 L826.39,598.67 L825.43,597.71 L825.90,596.95 L825.79,596.73 L825.70,596.51 L825.62,596.28 L824.76,596.08 L824.76,594.72 L825.62,594.52 L825.70,594.29 L825.79,594.07 L825.90,593.85 L825.43,593.09 L826.39,592.13 L827.15,592.60 L827.37,592.49 L827.59,592.40 L827.82,592.32 L828.02,591.46 L829.38,591.46 L829.58,592.32 L829.81,592.40 L830.03,592.49 L830.25,592.60 L831.01,592.13 L831.97,593.09 L831.50,593.85 L831.61,594.07 L831.70,594.29 Z" fill="#3a3a3a"/><circle cx="828.70" cy="595.40" r="1.6" fill="#fff"/><path d="M825.18,600.05 L825.84,600.15 L825.84,601.25 L825.18,601.35 L825.10,601.55 L824.99,601.74 L824.86,601.92 L825.09,602.54 L824.15,603.09 L823.73,602.57 L823.51,602.60 L823.29,602.60 L823.07,602.57 L822.65,603.09 L821.71,602.54 L821.94,601.92 L821.81,601.74 L821.70,601.55 L821.62,601.35 L820.96,601.25 L820.96,600.15 L821.62,600.05 L821.70,599.85 L821.81,599.66 L821.94,599.48 L821.71,598.86 L822.65,598.31 L823.07,598.83 L823.29,598.80 L823.51,598.80 L823.73,598.83 L824.15,598.31 L825.09,598.86 L824.86,599.48 L824.99,599.66 L825.10,599.85 Z" fill="#3a3a3a"/><circle cx="823.40" cy="600.70" r="0.75" fill="#fff"/><path d="M831.78,621.52 L832.64,621.72 L832.64,623.08 L831.78,623.28 L831.70,623.51 L831.61,623.73 L831.50,623.95 L831.97,624.71 L831.01,625.67 L830.25,625.20 L830.03,625.31 L829.81,625.40 L829.58,625.48 L829.38,626.34 L828.02,626.34 L827.82,625.48 L827.59,625.40 L827.37,625.31 L827.15,625.20 L826.39,625.67 L825.43,624.71 L825.90,623.95 L825.79,623.73 L825.70,623.51 L825.62,623.28 L824.76,623.08 L824.76,621.72 L825.62,621.52 L825.70,621.29 L825.79,621.07 L825.90,620.85 L825.43,620.09 L826.39,619.13 L827.15,619.60 L827.37,619.49 L827.59,619.40 L827.82,619.32 L828.02,618.46 L829.38,618.46 L829.58,619.32 L829.81,619.40 L830.03,619.49 L830.25,619.60 L831.01,619.13 L831.97,620.09 L831.50,620.85 L831.61,621.07 L831.70,621.29 Z" fill="#3a3a3a"/><circle cx="828.70" cy="622.40" r="1.6" fill="#fff"/><path d="M825.18,627.05 L825.84,627.15 L825.84,628.25 L825.18,628.35 L825.10,628.55 L824.99,628.74 L824.86,628.92 L825.09,629.54 L824.15,630.09 L823.73,629.57 L823.51,629.60 L823.29,629.60 L823.07,629.57 L822.65,630.09 L821.71,629.54 L821.94,628.92 L821.81,628.74 L821.70,628.55 L821.62,628.35 L820.96,628.25 L820.96,627.15 L821.62,627.05 L821.70,626.85 L821.81,626.66 L821.94,626.48 L821.71,625.86 L822.65,625.31 L823.07,625.83 L823.29,625.80 L823.51,625.80 L823.73,625.83 L824.15,625.31 L825.09,625.86 L824.86,626.48 L824.99,626.66 L825.10,626.85 Z" fill="#3a3a3a"/><circle cx="823.40" cy="627.70" r="0.75" fill="#fff"/><path d="M831.78,648.52 L832.64,648.72 L832.64,650.08 L831.78,650.28 L831.70,650.51 L831.61,650.73 L831.50,650.95 L831.97,651.71 L831.01,652.67 L830.25,652.20 L830.03,652.31 L829.81,652.40 L829.58,652.48 L829.38,653.34 L828.02,653.34 L827.82,652.48 L827.59,652.40 L827.37,652.31 L827.15,652.20 L826.39,652.67 L825.43,651.71 L825.90,650.95 L825.79,650.73 L825.70,650.51 L825.62,650.28 L824.76,650.08 L824.76,648.72 L825.62,648.52 L825.70,648.29 L825.79,648.07 L825.90,647.85 L825.43,647.09 L826.39,646.13 L827.15,646.60 L827.37,646.49 L827.59,646.40 L827.82,646.32 L828.02,645.46 L829.38,645.46 L829.58,646.32 L829.81,646.40 L830.03,646.49 L830.25,646.60 L831.01,646.13 L831.97,647.09 L831.50,647.85 L831.61,648.07 L831.70,648.29 Z" fill="#3a3a3a"/><circle cx="828.70" cy="649.40" r="1.6" fill="#fff"/><path d="M825.18,654.05 L825.84,654.15 L825.84,655.25 L825.18,655.35 L825.10,655.55 L824.99,655.74 L824.86,655.92 L825.09,656.54 L824.15,657.09 L823.73,656.57 L823.51,656.60 L823.29,656.60 L823.07,656.57 L822.65,657.09 L821.71,656.54 L821.94,655.92 L821.81,655.74 L821.70,655.55 L821.62,655.35 L820.96,655.25 L820.96,654.15 L821.62,654.05 L821.70,653.85 L821.81,653.66 L821.94,653.48 L821.71,652.86 L822.65,652.31 L823.07,652.83 L823.29,652.80 L823.51,652.80 L823.73,652.83 L824.15,652.31 L825.09,652.86 L824.86,653.48 L824.99,653.66 L825.10,653.85 Z" fill="#3a3a3a"/><circle cx="823.40" cy="654.70" r="0.75" fill="#fff"/><path d="M831.78,675.52 L832.64,675.72 L832.64,677.08 L831.78,677.28 L831.70,677.51 L831.61,677.73 L831.50,677.95 L831.97,678.71 L831.01,679.67 L830.25,679.20 L830.03,679.31 L829.81,679.40 L829.58,679.48 L829.38,680.34 L828.02,680.34 L827.82,679.48 L827.59,679.40 L827.37,679.31 L827.15,679.20 L826.39,679.67 L825.43,678.71 L825.90,677.95 L825.79,677.73 L825.70,677.51 L825.62,677.28 L824.76,677.08 L824.76,675.72 L825.62,675.52 L825.70,675.29 L825.79,675.07 L825.90,674.85 L825.43,674.09 L826.39,673.13 L827.15,673.60 L827.37,673.49 L827.59,673.40 L827.82,673.32 L828.02,672.46 L829.38,672.46 L829.58,673.32 L829.81,673.40 L830.03,673.49 L830.25,673.60 L831.01,673.13 L831.97,674.09 L831.50,674.85 L831.61,675.07 L831.70,675.29 Z" fill="#3a3a3a"/><circle cx="828.70" cy="676.40" r="1.6" fill="#fff"/><path d="M825.18,681.05 L825.84,681.15 L825.84,682.25 L825.18,682.35 L825.10,682.55 L824.99,682.74 L824.86,682.92 L825.09,683.54 L824.15,684.09 L823.73,683.57 L823.51,683.60 L823.29,683.60 L823.07,683.57 L822.65,684.09 L821.71,683.54 L821.94,682.92 L821.81,682.74 L821.70,682.55 L821.62,682.35 L820.96,682.25 L820.96,681.15 L821.62,681.05 L821.70,680.85 L821.81,680.66 L821.94,680.48 L821.71,679.86 L822.65,679.31 L823.07,679.83 L823.29,679.80 L823.51,679.80 L823.73,679.83 L824.15,679.31 L825.09,679.86 L824.86,680.48 L824.99,680.66 L825.10,680.85 Z" fill="#3a3a3a"/><circle cx="823.40" cy="681.70" r="0.75" fill="#fff"/><path d="M54.60,88.58 L54.28,87.94 L54.03,87.27 L53.84,86.59 L53.73,85.88 L53.70,85.17 L53.74,84.46 L53.86,83.76 L54.05,83.07 L54.31,82.41 L54.63,81.77 L55.03,81.18 L55.48,80.63 L55.99,80.13 L56.55,79.69 L57.15,79.31 L57.79,79.00 L58.46,78.75 L59.15,78.58 L59.86,78.48 L60.57,78.45 L61.28,78.50 L61.98,78.63 L62.66,78.82 L63.32,79.09 L63.95,79.43 L64.54,79.83 L65.08,80.29 L65.58,80.81 L66.01,81.37 L66.38,81.98 L66.69,82.62 L66.93,83.29 L67.09,83.99 L67.18,84.69 L67.20,85.41 L67.14,86.12 L67.00,86.82 L66.80,87.50 L66.52,88.15 L66.17,88.78 L64.18,87.53 L64.31,87.08 L64.40,86.63 L64.44,86.18 L64.45,85.75 L64.42,85.32 L64.35,84.91 L64.25,84.51 L64.12,84.12 L63.96,83.75 L63.78,83.39 L63.56,83.06 L63.32,82.74 L63.06,82.44 L62.77,82.16 L62.45,81.90 L62.11,81.67 L61.75,81.46 L61.36,81.28 L60.95,81.13 L60.52,81.02 L60.07,80.94 L59.61,80.90 L59.13,80.91 L58.64,80.97 L58.14,81.07 L57.64,81.24 L57.16,81.46 L56.68,81.74 L56.23,82.07 L55.81,82.47 L55.44,82.92 L55.11,83.42 L54.84,83.97 L54.63,84.56 L54.50,85.17 L54.45,85.81 L54.48,86.45 L54.59,87.09 L54.79,87.71 L55.07,88.31 Z" fill="#1a9bd7"/><line x1="56.4" y1="83.2" x2="61.4" y2="86.6" stroke="#1a9bd7" stroke-width="1"/><circle cx="183.4" cy="83.1" r="1.6" fill="#555"/><path d="M179,78 Q176.4,83 179,88.2 M181,80 Q179,83 181,86.2 M187.8,78 Q190.4,83 187.8,88.2 M185.8,80 Q187.8,83 185.8,86.2" fill="none" stroke="#5a5a5a" stroke-width="1.05"/><path d="M601,78 h1.2 v9.8 h14.5 v1.2 h-15.7 z M603.4,86.7 L603.4,83.2 L606.6,78.8 L610.6,82.9 L613.6,80.8 L615.6,86.7 Z" fill="#555"/><rect x="748.3" y="78" width="13.2" height="10" fill="#555"/><rect x="749.3" y="80.8" width="11.2" height="6.2" fill="#d4d4d4"/><rect x="750" y="80.8" width="1" height="6.2" fill="#f4f4f4"/><path d="M752.3,82.8 h7.6 M752.3,85.2 h7.6" stroke="#888" stroke-width="0.9"/><path d="M850.21,82.23 L851.85,82.32 L851.85,83.88 L850.21,83.97 L850.06,84.52 L849.85,85.04 L849.57,85.53 L850.66,86.76 L849.56,87.86 L848.33,86.77 L847.84,87.05 L847.32,87.26 L846.77,87.41 L846.68,89.05 L845.12,89.05 L845.03,87.41 L844.48,87.26 L843.96,87.05 L843.47,86.77 L842.24,87.86 L841.14,86.76 L842.23,85.53 L841.95,85.04 L841.74,84.52 L841.59,83.97 L839.95,83.88 L839.95,82.32 L841.59,82.23 L841.74,81.68 L841.95,81.16 L842.23,80.67 L841.14,79.44 L842.24,78.34 L843.47,79.43 L843.96,79.15 L844.48,78.94 L845.03,78.79 L845.12,77.15 L846.68,77.15 L846.77,78.79 L847.32,78.94 L847.84,79.15 L848.33,79.43 L849.56,78.34 L850.66,79.44 L849.57,80.67 L849.85,81.16 L850.06,81.68 Z" fill="#555"/><circle cx="845.90" cy="83.10" r="1.7" fill="#f6f6f6"/><path d="M8.3,13.9 L13.3,18.6 L20.7,9.3" fill="none" stroke="#fff" stroke-width="3.1"/><path d="M270.9,4.1 v8.8" stroke="#fff" stroke-width="1.5"/><path d="M271.6,5.6 C274.2,4.8 276.2,6.5 279.4,5.6 V10.2 C276.2,11.1 274.2,9.4 271.6,10" fill="none" stroke="#fff" stroke-width="1.1"/><path d="M296.60,2.50 L298.31,5.34 L301.55,6.09 L299.37,8.60 L299.66,11.91 L296.60,10.61 L293.54,11.91 L293.83,8.60 L291.65,6.09 L294.89,5.34 Z" fill="#fff"/><path d="M305.80,2.50 L307.51,5.34 L310.75,6.09 L308.57,8.60 L308.86,11.91 L305.80,10.61 L302.74,11.91 L303.03,8.60 L300.85,6.09 L304.09,5.34 Z" fill="#fff"/><path d="M315.00,2.50 L316.71,5.34 L319.95,6.09 L317.77,8.60 L318.06,11.91 L315.00,10.61 L311.94,11.91 L312.23,8.60 L310.05,6.09 L313.29,5.34 Z" fill="#fff"/><path d="M324.00,3.10 L325.51,5.62 L328.37,6.28 L326.45,8.50 L326.70,11.42 L324.00,10.28 L321.30,11.42 L321.55,8.50 L319.63,6.28 L322.49,5.62 Z" fill="none" stroke="#fff" stroke-width="1.4" stroke-linejoin="round"/><path d="M333.00,3.10 L334.51,5.62 L337.37,6.28 L335.45,8.50 L335.70,11.42 L333.00,10.28 L330.30,11.42 L330.55,8.50 L328.63,6.28 L331.49,5.62 Z" fill="none" stroke="#fff" stroke-width="1.4" stroke-linejoin="round"/></svg>
</body></html>
